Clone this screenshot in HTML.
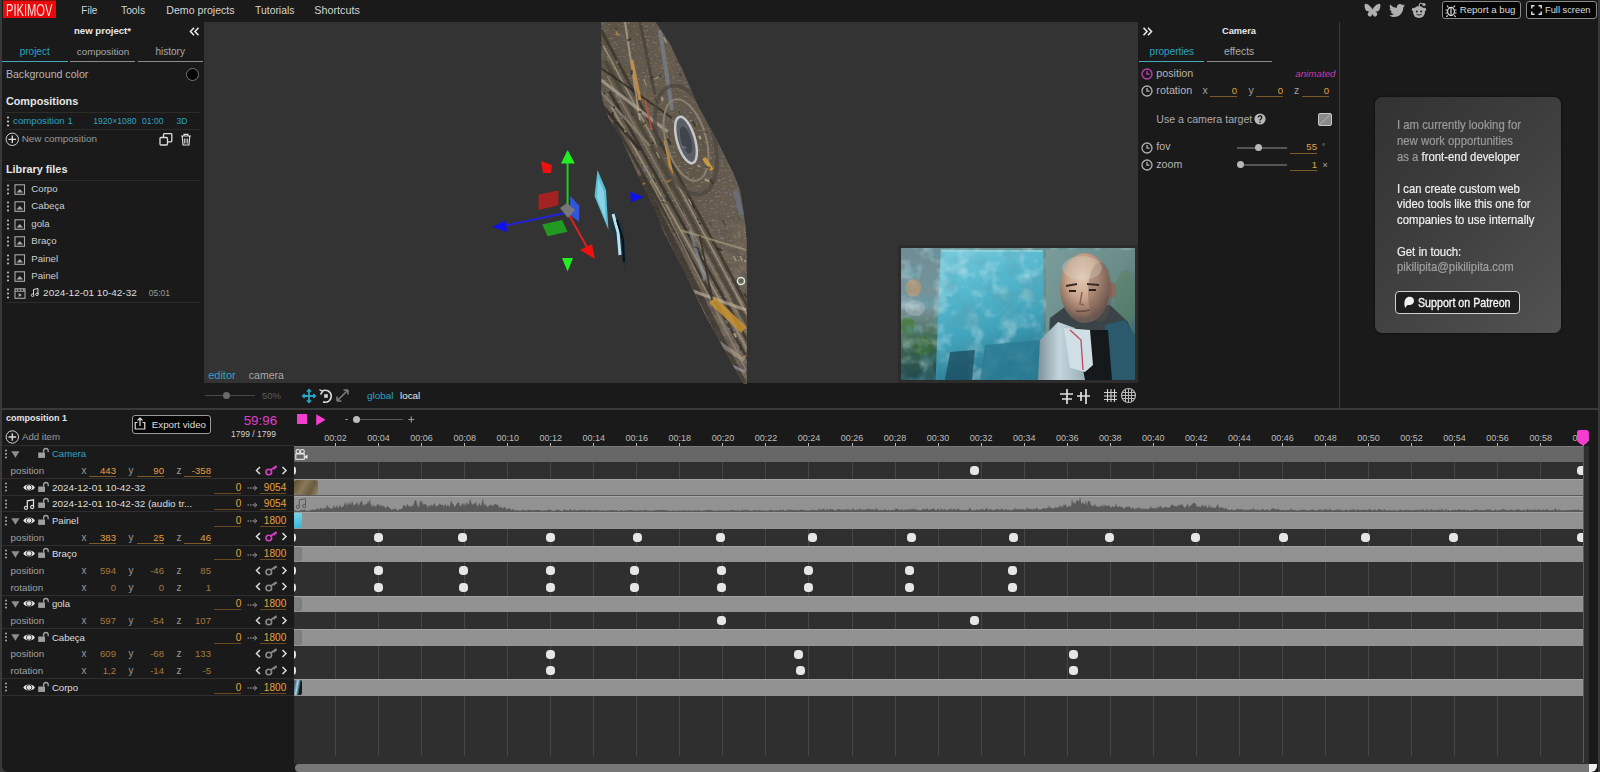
<!DOCTYPE html>
<html><head><meta charset="utf-8"><title>Pikimov</title>
<style>
html,body{margin:0;padding:0;width:1600px;height:772px;overflow:hidden;background:#3a3a3a;}
.t{position:absolute;line-height:1;white-space:pre;font-family:"Liberation Sans", sans-serif;}
.r{position:absolute;}
svg.r{overflow:visible;}
</style></head><body>
<div class="r" style="left:0px;top:0px;width:1600px;height:772px;background:#3a3a3a;"></div>
<div class="r" style="left:2px;top:0px;width:1596px;height:22px;background:#1a1a1a;"></div>
<div class="r" style="left:2px;top:22px;width:202px;height:386px;background:#1a1a1a;"></div>
<div class="r" style="left:204px;top:22px;width:934px;height:362px;background:#333333;"></div>
<div class="r" style="left:204px;top:383px;width:1135px;height:25px;background:#1a1a1a;"></div>
<div class="r" style="left:1138px;top:22px;width:201px;height:386px;background:#1a1a1a;"></div>
<div class="r" style="left:1339px;top:22px;width:1px;height:386px;background:#3a3a3a;"></div>
<div class="r" style="left:1340px;top:22px;width:258px;height:386px;background:#1a1a1a;"></div>
<div class="r" style="left:2px;top:410px;width:1596px;height:362px;background:#1a1a1a;border-bottom-left-radius:6px;"></div>
<div class="r" style="left:3px;top:0px;width:53px;height:18px;background:#e80a0a;"></div>
<div class="r" style="left:3px;top:0px;width:53px;height:1px;background:#8a1010;"></div>
<div class="t" style="left:5.90px;top:2.00px;font-size:17px;color:#ffdede;font-weight:400;transform:scaleX(0.655);transform-origin:0 0;letter-spacing:0px;">PIKIMOV</div>
<div class="t" style="left:81.30px;top:6.00px;font-size:10.0px;color:#d4d4d4;font-weight:400;">File</div>
<div class="t" style="left:121.00px;top:6.00px;font-size:10.3px;color:#d4d4d4;font-weight:400;">Tools</div>
<div class="t" style="left:166.30px;top:5.00px;font-size:10.6px;color:#d4d4d4;font-weight:400;">Demo projects</div>
<div class="t" style="left:255.00px;top:6.00px;font-size:10.4px;color:#d4d4d4;font-weight:400;">Tutorials</div>
<div class="t" style="left:314.30px;top:5.00px;font-size:10.8px;color:#d4d4d4;font-weight:400;">Shortcuts</div>
<svg class="r" style="left:1364px;top:3px;" width="17" height="15" viewBox="0 0 17 15"><path fill="#b0b0b0" d="M8.5 6.5 C7 3.5 3.5 0.5 1.5 0.8 C-0.2 1.2 0.8 6 2 7.5 C3 8.6 5 8.8 6 8.6 C3.8 9.4 3 10.8 4.2 12.6 C5.6 14.6 7.6 13.6 8.5 11 C9.4 13.6 11.4 14.6 12.8 12.6 C14 10.8 13.2 9.4 11 8.6 C12 8.8 14 8.6 15 7.5 C16.2 6 17.2 1.2 15.5 0.8 C13.5 0.5 10 3.5 8.5 6.5Z"/></svg>
<svg class="r" style="left:1389px;top:4px;" width="16" height="13" viewBox="0 0 16 13"><path fill="#b0b0b0" d="M16 1.5c-.6.3-1.2.4-1.9.5.7-.4 1.2-1 1.4-1.8-.6.4-1.3.6-2.1.8C12.8.4 12 0 11 0 9.2 0 7.8 1.5 7.8 3.3c0 .3 0 .5.1.7C5.2 3.9 2.800 2.600 1.100.6.800 1.100.7 1.600.7 2.300c0 1.100.6 2.100 1.500 2.700-.5 0-1-.2-1.500-.4 0 1.600 1.100 2.900 2.600 3.200-.3.1-.6.1-.9.1-.2 0-.4 0-.6-.1.4 1.300 1.600 2.300 3.100 2.300-1.100.9-2.500 1.400-4.100 1.400H0c1.500.9 3.200 1.500 5 1.500 6 0 9.300-5 9.300-9.300v-.4C15 2.800 15.600 2.200 16 1.500z"/></svg>
<svg class="r" style="left:1411px;top:2px;" width="16" height="16" viewBox="0 0 16 16"><circle cx="8" cy="10" r="6" fill="#b0b0b0"/><circle cx="13" cy="2.5" r="1.6" fill="#b0b0b0"/><path d="M8 4.2 L9 1 L13 2.2" stroke="#b0b0b0" stroke-width="1" fill="none"/><circle cx="2.6" cy="7.5" r="1.8" fill="#b0b0b0"/><circle cx="13.4" cy="7.5" r="1.8" fill="#b0b0b0"/><circle cx="5.8" cy="9.6" r="1" fill="#1a1a1a"/><circle cx="10.2" cy="9.6" r="1" fill="#1a1a1a"/><path d="M5.5 12.3 Q8 14 10.5 12.3" stroke="#1a1a1a" stroke-width="0.9" fill="none"/></svg>
<div class="r" style="left:1442px;top:1px;width:77px;height:16px;background:#060606;border:1px solid #8a8a8a;border-radius:3px;"></div>
<svg class="r" style="left:1445px;top:4px;" width="12" height="13" viewBox="0 0 12 13"><g stroke="#dcdcdc" stroke-width="1.2" fill="none"><ellipse cx="6" cy="7.5" rx="3.4" ry="4.2"/><path d="M6 3.5v8M2.6 6H0.5M9.4 6h2.1M2.6 9H0.5M9.4 9h2.1M3.5 3.5 L2 1.5M8.5 3.5 L10 1.5M2.8 11.5 L1.3 12.8M9.2 11.5 L10.7 12.8"/></g></svg>
<div class="t" style="left:1459.70px;top:5.00px;font-size:9.65px;color:#dcdcdc;font-weight:400;">Report a bug</div>
<div class="r" style="left:1526px;top:1px;width:69px;height:16px;background:#060606;border:1px solid #8a8a8a;border-radius:3px;"></div>
<svg class="r" style="left:1531px;top:5px;" width="11" height="10" viewBox="0 0 11 10"><path d="M0.8 3.5V0.8H3.5M7.5 0.8H10.2V3.5M10.2 6.5V9.2H7.5M3.5 9.2H0.8V6.5" stroke="#e0e0e0" stroke-width="1.4" fill="none"/></svg>
<div class="t" style="left:1545.00px;top:6.00px;font-size:9.3px;color:#dcdcdc;font-weight:400;">Full screen</div>
<div class="t" style="left:74.00px;top:26.00px;font-size:9.6px;color:#e8e8e8;font-weight:700;">new project*</div>
<svg class="r" style="left:189px;top:27px;" width="11" height="9" viewBox="0 0 11 9"><path d="M5 0.8 L1.5 4.5 L5 8.2 M9.5 0.8 L6 4.5 L9.5 8.2" stroke="#e6e6e6" stroke-width="1.6" fill="none"/></svg>
<div class="t" style="left:19.70px;top:47.00px;font-size:10.0px;color:#2ba3c4;font-weight:400;">project</div>
<div class="t" style="left:76.80px;top:47.00px;font-size:9.85px;color:#a9a9a9;font-weight:400;">composition</div>
<div class="t" style="left:155.50px;top:47.00px;font-size:10.0px;color:#a9a9a9;font-weight:400;">history</div>
<div class="r" style="left:2px;top:61px;width:66px;height:1px;background:#46aabf;"></div>
<div class="r" style="left:70px;top:61px;width:65px;height:1px;background:#8c8c8c;"></div>
<div class="r" style="left:138px;top:61px;width:65px;height:1px;background:#8c8c8c;"></div>
<div class="t" style="left:5.90px;top:69.00px;font-size:10.6px;color:#b4b4b4;font-weight:400;">Background color</div>
<div class="r" style="left:186px;top:67.5px;width:11px;height:11px;border-radius:50%;background:#050505;border:1px solid #777;"></div>
<div class="t" style="left:5.90px;top:96.00px;font-size:10.86px;color:#e6e6e6;font-weight:700;">Compositions</div>
<div class="r" style="left:6px;top:112px;width:194px;height:1px;background:#2c2c2c;"></div>
<svg class="r" style="left:6px;top:116px;" width="4" height="11" viewBox="0 0 4 11"><circle cx="2" cy="1.5" r="1" fill="#ddd"/><circle cx="2" cy="5.5" r="1" fill="#ddd"/><circle cx="2" cy="9.5" r="1" fill="#ddd"/></svg>
<div class="t" style="left:13.10px;top:116.00px;font-size:9.68px;color:#2ba3c4;font-weight:400;">composition 1</div>
<div class="t" style="left:93.20px;top:117.00px;font-size:8.6px;color:#2ba3c4;font-weight:400;">1920×1080</div>
<div class="t" style="left:142.00px;top:117.00px;font-size:8.6px;color:#2ba3c4;font-weight:400;">01:00</div>
<div class="t" style="left:176.50px;top:117.00px;font-size:8.6px;color:#2ba3c4;font-weight:400;">3D</div>
<div class="r" style="left:6px;top:129px;width:194px;height:1px;background:#2c2c2c;"></div>
<svg class="r" style="left:5px;top:132px;" width="15" height="15" viewBox="0 0 15 15"><circle cx="7.3" cy="7.3" r="6.2" stroke="#d0d0d0" stroke-width="1" fill="none"/><path d="M7.3 3.5v7.6M3.5 7.3h7.6" stroke="#e0e0e0" stroke-width="1.3"/></svg>
<div class="t" style="left:21.70px;top:134.00px;font-size:9.9px;color:#9a9a9a;font-weight:400;">New composition</div>
<svg class="r" style="left:159px;top:133px;" width="14" height="13" viewBox="0 0 14 13"><rect x="1" y="4.5" width="7.5" height="7.5" rx="1" stroke="#ddd" stroke-width="1.3" fill="none"/><path d="M4.5 4.5V1.5a0.8 0.8 0 0 1 .8-.8H12a.8.8 0 0 1 .8.8V8a.8.8 0 0 1-.8.8H8.5" stroke="#ddd" stroke-width="1.3" fill="none"/></svg>
<svg class="r" style="left:180px;top:133px;" width="12" height="13" viewBox="0 0 12 13"><path d="M1 3h10M4 3V1.3h4V3M2.3 3.5l.7 8.5h6l.7-8.5M4.8 5.5v5M7.2 5.5v5" stroke="#ddd" stroke-width="1.2" fill="none"/></svg>
<div class="t" style="left:5.90px;top:164.00px;font-size:10.87px;color:#e6e6e6;font-weight:700;">Library files</div>
<div class="r" style="left:6px;top:180px;width:194px;height:1px;background:#2c2c2c;"></div>
<svg class="r" style="left:6px;top:183.7px;" width="4" height="11" viewBox="0 0 4 11"><circle cx="2" cy="1.5" r="1" fill="#ccc"/><circle cx="2" cy="5.5" r="1" fill="#ccc"/><circle cx="2" cy="9.5" r="1" fill="#ccc"/></svg>
<svg class="r" style="left:14px;top:183.7px;" width="12" height="11" viewBox="0 0 12 11"><rect x="1" y="0.8" width="9.5" height="9.5" stroke="#aaa" stroke-width="1.1" fill="none"/><path d="M2.5 8.5 L5.8 5 L9 8.5Z" fill="#aaa"/></svg>
<div class="t" style="left:31.30px;top:184.00px;font-size:9.66px;color:#cfcfcf;font-weight:400;">Corpo</div>
<svg class="r" style="left:6px;top:201.14999999999998px;" width="4" height="11" viewBox="0 0 4 11"><circle cx="2" cy="1.5" r="1" fill="#ccc"/><circle cx="2" cy="5.5" r="1" fill="#ccc"/><circle cx="2" cy="9.5" r="1" fill="#ccc"/></svg>
<svg class="r" style="left:14px;top:201.14999999999998px;" width="12" height="11" viewBox="0 0 12 11"><rect x="1" y="0.8" width="9.5" height="9.5" stroke="#aaa" stroke-width="1.1" fill="none"/><path d="M2.5 8.5 L5.8 5 L9 8.5Z" fill="#aaa"/></svg>
<div class="t" style="left:31.30px;top:201.00px;font-size:9.66px;color:#cfcfcf;font-weight:400;">Cabeça</div>
<svg class="r" style="left:6px;top:218.6px;" width="4" height="11" viewBox="0 0 4 11"><circle cx="2" cy="1.5" r="1" fill="#ccc"/><circle cx="2" cy="5.5" r="1" fill="#ccc"/><circle cx="2" cy="9.5" r="1" fill="#ccc"/></svg>
<svg class="r" style="left:14px;top:218.6px;" width="12" height="11" viewBox="0 0 12 11"><rect x="1" y="0.8" width="9.5" height="9.5" stroke="#aaa" stroke-width="1.1" fill="none"/><path d="M2.5 8.5 L5.8 5 L9 8.5Z" fill="#aaa"/></svg>
<div class="t" style="left:31.30px;top:219.00px;font-size:9.66px;color:#cfcfcf;font-weight:400;">gola</div>
<svg class="r" style="left:6px;top:236.04999999999998px;" width="4" height="11" viewBox="0 0 4 11"><circle cx="2" cy="1.5" r="1" fill="#ccc"/><circle cx="2" cy="5.5" r="1" fill="#ccc"/><circle cx="2" cy="9.5" r="1" fill="#ccc"/></svg>
<svg class="r" style="left:14px;top:236.04999999999998px;" width="12" height="11" viewBox="0 0 12 11"><rect x="1" y="0.8" width="9.5" height="9.5" stroke="#aaa" stroke-width="1.1" fill="none"/><path d="M2.5 8.5 L5.8 5 L9 8.5Z" fill="#aaa"/></svg>
<div class="t" style="left:31.30px;top:236.00px;font-size:9.66px;color:#cfcfcf;font-weight:400;">Braço</div>
<svg class="r" style="left:6px;top:253.5px;" width="4" height="11" viewBox="0 0 4 11"><circle cx="2" cy="1.5" r="1" fill="#ccc"/><circle cx="2" cy="5.5" r="1" fill="#ccc"/><circle cx="2" cy="9.5" r="1" fill="#ccc"/></svg>
<svg class="r" style="left:14px;top:253.5px;" width="12" height="11" viewBox="0 0 12 11"><rect x="1" y="0.8" width="9.5" height="9.5" stroke="#aaa" stroke-width="1.1" fill="none"/><path d="M2.5 8.5 L5.8 5 L9 8.5Z" fill="#aaa"/></svg>
<div class="t" style="left:31.30px;top:254.00px;font-size:9.66px;color:#cfcfcf;font-weight:400;">Painel</div>
<svg class="r" style="left:6px;top:270.95px;" width="4" height="11" viewBox="0 0 4 11"><circle cx="2" cy="1.5" r="1" fill="#ccc"/><circle cx="2" cy="5.5" r="1" fill="#ccc"/><circle cx="2" cy="9.5" r="1" fill="#ccc"/></svg>
<svg class="r" style="left:14px;top:270.95px;" width="12" height="11" viewBox="0 0 12 11"><rect x="1" y="0.8" width="9.5" height="9.5" stroke="#aaa" stroke-width="1.1" fill="none"/><path d="M2.5 8.5 L5.8 5 L9 8.5Z" fill="#aaa"/></svg>
<div class="t" style="left:31.30px;top:271.00px;font-size:9.66px;color:#cfcfcf;font-weight:400;">Painel</div>
<svg class="r" style="left:6px;top:288.4px;" width="4" height="11" viewBox="0 0 4 11"><circle cx="2" cy="1.5" r="1" fill="#ccc"/><circle cx="2" cy="5.5" r="1" fill="#ccc"/><circle cx="2" cy="9.5" r="1" fill="#ccc"/></svg>
<svg class="r" style="left:14px;top:288.4px;" width="12" height="11" viewBox="0 0 12 11"><rect x="1" y="0.8" width="10" height="9.5" stroke="#aaa" stroke-width="1.1" fill="none"/><path d="M1 3.3h10M3 0.8l1 2.5M6 0.8l1 2.5M9 0.8l1 2.5" stroke="#aaa" stroke-width="0.9"/><path d="M4.6 5 L8 7 L4.6 9Z" fill="#aaa"/></svg>
<svg class="r" style="left:31px;top:288.4px;" width="8" height="9" viewBox="0 0 8 9"><path d="M2.5 7.3V1.5L7 0.5V6.3" stroke="#ddd" stroke-width="1" fill="none"/><circle cx="1.6" cy="7.3" r="1.3" stroke="#ddd" stroke-width="0.9" fill="none"/><circle cx="6" cy="6.3" r="1.3" stroke="#ddd" stroke-width="0.9" fill="none"/></svg>
<div class="t" style="left:43.10px;top:288.00px;font-size:9.97px;color:#dedede;font-weight:400;">2024-12-01 10-42-32</div>
<div class="t" style="left:148.80px;top:289.00px;font-size:8.5px;color:#9a9a9a;font-weight:400;">05:01</div>
<div class="r" style="left:6px;top:302px;width:194px;height:1px;background:#2c2c2c;"></div>
<div class="r" style="left:204px;top:22px;width:934px;height:361.5px;overflow:hidden;">
<svg class="r" style="left:0;top:0" width="934" height="362">
<defs>
<linearGradient id="pg" x1="0" y1="0" x2="0.6" y2="1">
<stop offset="0" stop-color="#5a5042"/><stop offset="0.3" stop-color="#675d4c"/><stop offset="0.55" stop-color="#5e5446"/><stop offset="0.8" stop-color="#6c6052"/><stop offset="1" stop-color="#766a5c"/>
</linearGradient>
<filter id="nzd" x="0" y="0" width="100%" height="100%"><feTurbulence type="fractalNoise" baseFrequency="0.07 0.12" numOctaves="4" seed="7"/><feColorMatrix type="matrix" values="0 0 0 0 0.12  0 0 0 0 0.1  0 0 0 0 0.08  3.5 0 0 0 -1.35"/></filter>
<filter id="nzf" x="0" y="0" width="100%" height="100%"><feTurbulence type="fractalNoise" baseFrequency="0.35 0.5" numOctaves="2" seed="3"/><feColorMatrix type="matrix" values="0 0 0 0 0.85  0 0 0 0 0.78  0 0 0 0 0.66  0 3 0 0 -1.75"/></filter>
<filter id="nzl" x="0" y="0" width="100%" height="100%"><feTurbulence type="fractalNoise" baseFrequency="0.09 0.15" numOctaves="4" seed="21"/><feColorMatrix type="matrix" values="0 0 0 0 0.78  0 0 0 0 0.7  0 0 0 0 0.58  0 2.5 0 0 -1.25"/></filter>
<clipPath id="pc"><polygon points="397.4,0.0 451.6,0.0 465.6,21.3 479.6,50.4 493.6,83.0 510.8,114.3 529.0,150.6 536.2,168.7 541.6,205.0 542.7,218.0 542.7,362.0 539.6,362.0 523.0,332.4 500.2,290.9 480.6,249.5 458.8,208.0 450.9,187.0 432.7,150.6 416.4,114.0 404.6,96.0 398.3,78.0 397.4,70.0"/></clipPath>
</defs>
<polygon points="397.4,0.0 451.6,0.0 465.6,21.3 479.6,50.4 493.6,83.0 510.8,114.3 529.0,150.6 536.2,168.7 541.6,205.0 542.7,218.0 542.7,362.0 539.6,362.0 523.0,332.4 500.2,290.9 480.6,249.5 458.8,208.0 450.9,187.0 432.7,150.6 416.4,114.0 404.6,96.0 398.3,78.0 397.4,70.0" fill="url(#pg)"/>
<g clip-path="url(#pc)">
<rect x="390" y="0" width="160" height="362" filter="url(#nzd)"/>
<rect x="390" y="0" width="160" height="362" filter="url(#nzf)" opacity="0.35"/>
<path d="M397.0,8.0 L556.0,308.0" stroke="#3c372c" stroke-width="3" opacity="0.85" fill="none"/><path d="M399.1,23.4 L556.0,316.4" stroke="#a09580" stroke-width="1.5" opacity="0.85" fill="none"/><path d="M401.2,38.8 L556.0,324.8" stroke="#4a4438" stroke-width="4" opacity="0.85" fill="none"/><path d="M403.3,54.2 L556.0,333.2" stroke="#8a7e68" stroke-width="1.5" opacity="0.85" fill="none"/><path d="M405.4,69.6 L556.0,341.6" stroke="#35322a" stroke-width="3" opacity="0.85" fill="none"/><path d="M407.5,85.0 L556.0,350.0" stroke="#9c907a" stroke-width="2" opacity="0.85" fill="none"/><path d="M409.6,100.4 L556.0,358.4" stroke="#3a362e" stroke-width="3" opacity="0.85" fill="none"/><path d="M397.0,58.0 L464.0,110.0" stroke="#a8a090" stroke-width="3" opacity="0.8" fill="none"/><path d="M397.0,70.0 L446.0,124.0" stroke="#8a8274" stroke-width="2.5" opacity="0.8" fill="none"/><path d="M397.0,46.0 L468.0,96.0" stroke="#2a2822" stroke-width="2" opacity="0.8" fill="none"/><path d="M397.0,82.0 L436.0,128.0" stroke="#2a2620" stroke-width="3" opacity="0.8" fill="none"/><path d="M436.0,154.0 L540.0,362.0" stroke="#2e2a24" stroke-width="6" opacity="0.6" fill="none"/><path d="M446.0,158.0 L542.0,348.0" stroke="#9a8c78" stroke-width="1.5" opacity="0.7" fill="none"/><path d="M421.0,0.0 L436.0,98.0" stroke="#b8a890" stroke-width="2" opacity="0.7" fill="none"/><path d="M436.0,0.0 L451.0,73.0" stroke="#3a3a38" stroke-width="3" opacity="0.6" fill="none"/><path d="M456.0,8.0 L468.0,88.0" stroke="#7a8294" stroke-width="4" opacity="0.7" fill="none"/><path d="M428.0,38.0 L436.0,78.0" stroke="#c89048" stroke-width="3" opacity="0.9" fill="none"/><path d="M441.0,78.0 L448.0,108.0" stroke="#c05040" stroke-width="2" opacity="0.8" fill="none"/><path d="M461.0,118.0 L468.0,153.0" stroke="#d09838" stroke-width="3" opacity="0.8" fill="none"/><g transform="translate(482,118) rotate(-16)"><ellipse rx="28" ry="56" fill="none" stroke="#4a4640" stroke-width="4" opacity="0.7"/><ellipse rx="20" ry="42" fill="none" stroke="#8a8070" stroke-width="2"/><ellipse rx="9" ry="24" fill="#5a5e66" stroke="#c8c8cc" stroke-width="2.5"/><ellipse rx="5" ry="14" fill="#40444c"/></g><path d="M496.0,73.0 L502.0,88.0" stroke="#7a8aa0" stroke-width="5" opacity="0.8" fill="none"/><path d="M531.0,168.0 L538.0,193.0" stroke="#6a7284" stroke-width="5" opacity="0.8" fill="none"/><path d="M500.0,136.0 L508.0,148.0" stroke="#d4a038" stroke-width="4" opacity="0.9" fill="none"/><path d="M476.0,208.0 L542.0,228.0" stroke="#a89878" stroke-width="2" opacity="0.7" fill="none"/><path d="M486.0,268.0 L542.0,288.0" stroke="#c8b8a0" stroke-width="3" opacity="0.6" fill="none"/><path d="M508.0,278.0 L540.0,308.0" stroke="#c89030" stroke-width="8" opacity="0.85" fill="none"/><path d="M496.0,308.0 L540.0,338.0" stroke="#c0b0a0" stroke-width="4" opacity="0.5" fill="none"/><path d="M496.0,214.0 L508.0,278.0" stroke="#383430" stroke-width="2" opacity="0.9" fill="none"/><path d="M486.0,208.0 L501.0,258.0" stroke="#8a96a8" stroke-width="3" opacity="0.6" fill="none"/><path d="M516.0,338.0 L541.0,350.0" stroke="#a0a8b8" stroke-width="3" opacity="0.6" fill="none"/><circle cx="537" cy="259" r="3.5" fill="none" stroke="#d8e8d8" stroke-width="1.5"/>
<path d="M490.6,9.1 l1.4,2.9" stroke="#2e2a24" stroke-width="1" opacity="0.75"/><path d="M496.2,323.0 l2.3,4.4" stroke="#b8a888" stroke-width="1" opacity="0.75"/><path d="M409.9,84.2 l0.0,2.1" stroke="#2a2620" stroke-width="2" opacity="0.75"/><path d="M428.6,213.3 l5.5,-3.2" stroke="#2e2a24" stroke-width="2" opacity="0.75"/><path d="M446.4,56.3 l3.2,-1.8" stroke="#3a342a" stroke-width="2" opacity="0.75"/><path d="M410.3,306.8 l0.0,3.3" stroke="#b8a888" stroke-width="2" opacity="0.75"/><path d="M475.4,352.3 l0.8,2.2" stroke="#c8b898" stroke-width="1.5" opacity="0.75"/><path d="M481.4,255.1 l2.5,4.7" stroke="#c8b898" stroke-width="1" opacity="0.75"/><path d="M522.6,313.7 l1.2,3.2" stroke="#6a7484" stroke-width="1" opacity="0.75"/><path d="M450.8,75.8 l2.3,5.0" stroke="#3a342a" stroke-width="1" opacity="0.75"/><path d="M475.1,88.6 l1.3,3.7" stroke="#3a3028" stroke-width="1" opacity="0.75"/><path d="M497.3,305.1 l2.0,-1.1" stroke="#b8a888" stroke-width="1.5" opacity="0.75"/><path d="M455.4,24.0 l0.0,6.4" stroke="#6a7484" stroke-width="1" opacity="0.75"/><path d="M493.0,143.2 l4.0,1.5" stroke="#c8b898" stroke-width="1" opacity="0.75"/><path d="M432.5,203.2 l2.4,5.2" stroke="#c08a38" stroke-width="2" opacity="0.75"/><path d="M449.6,361.0 l2.1,4.0" stroke="#3a342a" stroke-width="1" opacity="0.75"/><path d="M523.4,55.3 l2.8,5.3" stroke="#c08a38" stroke-width="1" opacity="0.75"/><path d="M452.9,215.7 l1.6,4.4" stroke="#3a3028" stroke-width="1" opacity="0.75"/><path d="M496.7,41.5 l0.0,5.8" stroke="#6a7484" stroke-width="1" opacity="0.75"/><path d="M439.4,57.3 l3.2,6.0" stroke="#c8b898" stroke-width="1" opacity="0.75"/><path d="M471.1,38.5 l3.3,1.2" stroke="#3a3028" stroke-width="1" opacity="0.75"/><path d="M418.6,276.0 l0.0,6.8" stroke="#3a3028" stroke-width="1" opacity="0.75"/><path d="M484.6,176.9 l3.1,5.9" stroke="#c8b898" stroke-width="1" opacity="0.75"/><path d="M404.6,317.8 l1.1,2.1" stroke="#4a4236" stroke-width="1" opacity="0.75"/><path d="M540.7,192.8 l1.2,2.3" stroke="#4a4236" stroke-width="1" opacity="0.75"/><path d="M435.2,315.8 l2.3,6.4" stroke="#3a3028" stroke-width="1" opacity="0.75"/><path d="M501.5,144.4 l4.9,1.8" stroke="#4a4236" stroke-width="2" opacity="0.75"/><path d="M413.9,81.3 l0.9,1.9" stroke="#3a3028" stroke-width="1" opacity="0.75"/><path d="M483.1,2.6 l4.8,1.8" stroke="#2a2620" stroke-width="1" opacity="0.75"/><path d="M530.0,311.2 l2.1,4.0" stroke="#c8b898" stroke-width="2" opacity="0.75"/><path d="M427.7,47.9 l0.0,4.9" stroke="#2a2620" stroke-width="2" opacity="0.75"/><path d="M515.5,68.9 l2.5,4.7" stroke="#6a7484" stroke-width="2" opacity="0.75"/><path d="M456.8,312.7 l2.5,4.7" stroke="#3a342a" stroke-width="1" opacity="0.75"/><path d="M455.6,122.8 l2.2,-1.3" stroke="#2a2620" stroke-width="1" opacity="0.75"/><path d="M475.4,50.7 l1.6,3.0" stroke="#2a2620" stroke-width="1" opacity="0.75"/><path d="M461.6,311.8 l0.0,2.5" stroke="#3a3028" stroke-width="1" opacity="0.75"/><path d="M539.4,335.3 l2.8,-1.6" stroke="#c08a38" stroke-width="2" opacity="0.75"/><path d="M467.2,313.0 l1.3,2.5" stroke="#b8a888" stroke-width="2" opacity="0.75"/><path d="M435.3,283.8 l1.2,3.2" stroke="#3a3028" stroke-width="2" opacity="0.75"/><path d="M418.9,107.4 l2.3,4.3" stroke="#3a3028" stroke-width="1" opacity="0.75"/><path d="M506.7,20.7 l0.0,4.4" stroke="#3a3028" stroke-width="1" opacity="0.75"/><path d="M404.4,183.8 l2.5,-1.5" stroke="#3a342a" stroke-width="1" opacity="0.75"/><path d="M455.8,340.9 l0.0,3.2" stroke="#b8a888" stroke-width="1" opacity="0.75"/><path d="M458.0,211.3 l0.0,3.6" stroke="#c8b898" stroke-width="1" opacity="0.75"/><path d="M495.1,113.7 l1.7,3.6" stroke="#c8b898" stroke-width="2" opacity="0.75"/><path d="M442.8,272.2 l1.0,1.8" stroke="#3a342a" stroke-width="1" opacity="0.75"/><path d="M475.6,183.1 l3.1,5.9" stroke="#3a342a" stroke-width="1" opacity="0.75"/><path d="M450.7,57.1 l4.1,-2.4" stroke="#c8b898" stroke-width="1" opacity="0.75"/><path d="M494.8,200.8 l2.4,0.9" stroke="#2e2a24" stroke-width="1.5" opacity="0.75"/><path d="M413.1,38.7 l0.0,2.8" stroke="#c8b898" stroke-width="1" opacity="0.75"/><path d="M502.2,73.7 l5.9,2.1" stroke="#3a3028" stroke-width="2" opacity="0.75"/><path d="M433.2,328.8 l1.2,2.2" stroke="#c08a38" stroke-width="1.5" opacity="0.75"/><path d="M402.5,120.7 l2.4,4.6" stroke="#c8b898" stroke-width="1" opacity="0.75"/><path d="M505.7,199.7 l1.6,4.5" stroke="#3a342a" stroke-width="1" opacity="0.75"/><path d="M535.9,250.1 l2.2,4.2" stroke="#6a7484" stroke-width="1" opacity="0.75"/><path d="M459.6,15.1 l2.7,5.9" stroke="#b8a888" stroke-width="1.5" opacity="0.75"/><path d="M427.1,90.3 l1.8,3.3" stroke="#3a3028" stroke-width="2" opacity="0.75"/><path d="M540.1,271.3 l3.0,5.6" stroke="#2e2a24" stroke-width="2" opacity="0.75"/><path d="M399.7,266.6 l2.5,5.4" stroke="#c08a38" stroke-width="1" opacity="0.75"/><path d="M435.5,285.0 l1.8,3.5" stroke="#b8a888" stroke-width="2" opacity="0.75"/><path d="M428.9,295.6 l1.3,3.5" stroke="#2a2620" stroke-width="1" opacity="0.75"/><path d="M399.5,69.9 l1.4,3.1" stroke="#3a342a" stroke-width="1.5" opacity="0.75"/><path d="M448.0,184.4 l6.5,2.4" stroke="#3a3028" stroke-width="1.5" opacity="0.75"/><path d="M535.0,41.8 l1.2,2.6" stroke="#c8b898" stroke-width="1" opacity="0.75"/><path d="M412.0,157.3 l5.6,2.0" stroke="#c08a38" stroke-width="1" opacity="0.75"/><path d="M453.0,208.7 l0.9,2.0" stroke="#c08a38" stroke-width="1" opacity="0.75"/><path d="M472.9,292.0 l5.3,1.9" stroke="#2a2620" stroke-width="1.5" opacity="0.75"/><path d="M459.8,343.5 l2.2,4.6" stroke="#3a342a" stroke-width="1.5" opacity="0.75"/><path d="M471.1,241.4 l1.7,3.6" stroke="#c8b898" stroke-width="1" opacity="0.75"/><path d="M424.4,240.7 l1.8,5.1" stroke="#2e2a24" stroke-width="1.5" opacity="0.75"/><path d="M456.1,301.8 l1.5,3.1" stroke="#c08a38" stroke-width="1.5" opacity="0.75"/><path d="M464.8,160.1 l2.1,4.0" stroke="#2e2a24" stroke-width="1" opacity="0.75"/><path d="M438.0,240.3 l0.0,3.7" stroke="#2a2620" stroke-width="1.5" opacity="0.75"/><path d="M429.2,72.1 l1.0,2.0" stroke="#4a4236" stroke-width="1" opacity="0.75"/><path d="M463.4,320.8 l0.0,3.0" stroke="#c08a38" stroke-width="2" opacity="0.75"/><path d="M455.1,53.4 l1.9,0.7" stroke="#3a342a" stroke-width="2" opacity="0.75"/><path d="M428.4,291.1 l4.3,1.6" stroke="#b8a888" stroke-width="1" opacity="0.75"/><path d="M531.8,43.9 l2.8,5.3" stroke="#3a3028" stroke-width="1.5" opacity="0.75"/><path d="M536.6,322.7 l0.0,6.1" stroke="#3a3028" stroke-width="2" opacity="0.75"/><path d="M518.9,198.3 l2.7,5.0" stroke="#4a4236" stroke-width="2" opacity="0.75"/><path d="M434.4,89.5 l3.2,1.2" stroke="#3a3028" stroke-width="2" opacity="0.75"/><path d="M488.8,99.4 l2.6,4.9" stroke="#2a2620" stroke-width="1.5" opacity="0.75"/><path d="M445.7,323.3 l1.3,2.4" stroke="#2a2620" stroke-width="2" opacity="0.75"/><path d="M498.7,255.7 l1.9,3.6" stroke="#6a7484" stroke-width="2" opacity="0.75"/><path d="M457.5,74.9 l1.4,3.7" stroke="#b8a888" stroke-width="2" opacity="0.75"/><path d="M466.6,341.3 l2.4,5.2" stroke="#c08a38" stroke-width="1" opacity="0.75"/><path d="M468.3,98.8 l0.7,2.0" stroke="#6a7484" stroke-width="2" opacity="0.75"/><path d="M503.2,304.3 l3.2,6.1" stroke="#3a3028" stroke-width="1" opacity="0.75"/><path d="M530.2,214.3 l2.0,0.7" stroke="#c08a38" stroke-width="1" opacity="0.75"/><path d="M524.3,65.8 l1.6,3.5" stroke="#2a2620" stroke-width="2" opacity="0.75"/><path d="M444.4,275.6 l1.2,3.2" stroke="#c08a38" stroke-width="1.5" opacity="0.75"/><path d="M519.6,170.3 l4.4,1.6" stroke="#6a7484" stroke-width="1" opacity="0.75"/><path d="M492.2,282.8 l2.1,0.8" stroke="#b8a888" stroke-width="1" opacity="0.75"/><path d="M425.5,7.4 l1.5,2.8" stroke="#4a4236" stroke-width="1" opacity="0.75"/><path d="M479.5,78.9 l3.1,1.1" stroke="#6a7484" stroke-width="1" opacity="0.75"/><path d="M485.7,348.9 l2.4,0.9" stroke="#2e2a24" stroke-width="1.5" opacity="0.75"/><path d="M412.0,9.3 l2.1,4.4" stroke="#c08a38" stroke-width="2" opacity="0.75"/><path d="M535.3,71.8 l0.0,5.5" stroke="#2a2620" stroke-width="1" opacity="0.75"/><path d="M499.2,109.2 l4.7,1.7" stroke="#3a342a" stroke-width="1" opacity="0.75"/><path d="M447.4,155.1 l1.0,2.1" stroke="#6a7484" stroke-width="1" opacity="0.75"/><path d="M521.7,297.7 l2.0,3.7" stroke="#6a7484" stroke-width="2" opacity="0.75"/><path d="M500.7,157.6 l4.3,1.6" stroke="#c8b898" stroke-width="2" opacity="0.75"/><path d="M464.8,298.9 l0.0,3.3" stroke="#2a2620" stroke-width="1" opacity="0.75"/><path d="M437.3,163.2 l3.7,-2.2" stroke="#c08a38" stroke-width="1.5" opacity="0.75"/><path d="M400.2,308.0 l2.1,3.9" stroke="#6a7484" stroke-width="1.5" opacity="0.75"/><path d="M446.4,318.7 l6.0,2.2" stroke="#3a3028" stroke-width="1" opacity="0.75"/><path d="M472.5,69.2 l2.6,4.9" stroke="#4a4236" stroke-width="1" opacity="0.75"/><path d="M498.2,233.8 l1.5,4.0" stroke="#b8a888" stroke-width="1" opacity="0.75"/><path d="M439.5,146.4 l1.7,3.1" stroke="#6a7484" stroke-width="2" opacity="0.75"/><path d="M477.9,124.4 l4.5,1.6" stroke="#6a7484" stroke-width="2" opacity="0.75"/><path d="M436.1,91.0 l2.6,5.0" stroke="#6a7484" stroke-width="1" opacity="0.75"/><path d="M505.9,344.2 l2.7,1.0" stroke="#2a2620" stroke-width="2" opacity="0.75"/><path d="M436.9,213.4 l4.0,-2.3" stroke="#c8b898" stroke-width="1" opacity="0.75"/><path d="M519.2,107.2 l1.2,2.6" stroke="#b8a888" stroke-width="1" opacity="0.75"/><path d="M436.6,352.7 l0.0,3.5" stroke="#2e2a24" stroke-width="2" opacity="0.75"/><path d="M411.2,4.4 l1.8,3.9" stroke="#4a4236" stroke-width="1.5" opacity="0.75"/><path d="M423.3,18.6 l3.8,-2.2" stroke="#3a342a" stroke-width="2" opacity="0.75"/><path d="M468.8,208.9 l2.1,0.8" stroke="#2e2a24" stroke-width="1.5" opacity="0.75"/><path d="M408.6,89.8 l0.0,5.8" stroke="#2a2620" stroke-width="2" opacity="0.75"/><path d="M462.7,160.3 l4.3,-2.5" stroke="#c08a38" stroke-width="1.5" opacity="0.75"/><path d="M480.2,21.8 l2.3,0.9" stroke="#2a2620" stroke-width="1" opacity="0.75"/><path d="M435.2,29.4 l1.3,2.5" stroke="#3a342a" stroke-width="1" opacity="0.75"/><path d="M396.4,163.1 l0.0,4.3" stroke="#b8a888" stroke-width="1" opacity="0.75"/><path d="M438.6,102.3 l3.7,-2.1" stroke="#2a2620" stroke-width="1.5" opacity="0.75"/><path d="M512.6,226.3 l5.7,2.1" stroke="#2a2620" stroke-width="2" opacity="0.75"/><path d="M413.0,81.4 l3.1,5.8" stroke="#2e2a24" stroke-width="1" opacity="0.75"/><path d="M404.8,286.9 l0.0,5.7" stroke="#c8b898" stroke-width="2" opacity="0.75"/><path d="M414.4,249.3 l3.8,1.4" stroke="#c8b898" stroke-width="2" opacity="0.75"/><path d="M460.8,216.5 l1.9,5.3" stroke="#c8b898" stroke-width="1" opacity="0.75"/><path d="M409.5,348.2 l5.5,-3.2" stroke="#b8a888" stroke-width="1.5" opacity="0.75"/><path d="M481.3,276.2 l2.0,3.8" stroke="#4a4236" stroke-width="1.5" opacity="0.75"/><path d="M422.9,211.9 l5.7,2.1" stroke="#3a342a" stroke-width="2" opacity="0.75"/><path d="M447.5,120.7 l2.4,0.9" stroke="#2e2a24" stroke-width="1.5" opacity="0.75"/><path d="M456.9,179.4 l6.3,2.3" stroke="#3a3028" stroke-width="1" opacity="0.75"/><path d="M463.3,113.9 l1.1,2.3" stroke="#c08a38" stroke-width="1" opacity="0.75"/><path d="M493.3,196.4 l0.8,2.1" stroke="#3a3028" stroke-width="1.5" opacity="0.75"/><path d="M488.1,180.5 l2.0,5.5" stroke="#2a2620" stroke-width="1.5" opacity="0.75"/><path d="M477.3,335.8 l2.2,6.0" stroke="#4a4236" stroke-width="1" opacity="0.75"/><path d="M400.3,228.1 l2.8,-1.6" stroke="#2e2a24" stroke-width="1.5" opacity="0.75"/><path d="M477.5,199.9 l1.5,2.8" stroke="#3a342a" stroke-width="2" opacity="0.75"/><path d="M536.2,234.5 l2.1,4.0" stroke="#c8b898" stroke-width="1.5" opacity="0.75"/><path d="M457.5,174.7 l1.1,3.0" stroke="#3a3028" stroke-width="1" opacity="0.75"/><path d="M452.8,333.7 l0.0,5.7" stroke="#2e2a24" stroke-width="1" opacity="0.75"/><path d="M436.9,286.0 l1.3,3.5" stroke="#3a3028" stroke-width="1.5" opacity="0.75"/><path d="M517.4,102.4 l2.6,5.6" stroke="#4a4236" stroke-width="1" opacity="0.75"/><path d="M462.1,175.3 l2.0,4.3" stroke="#3a3028" stroke-width="2" opacity="0.75"/><path d="M463.4,116.5 l3.2,6.1" stroke="#2a2620" stroke-width="2" opacity="0.75"/><path d="M430.6,280.7 l1.7,3.2" stroke="#4a4236" stroke-width="2" opacity="0.75"/><path d="M453.1,240.3 l4.6,-2.6" stroke="#2e2a24" stroke-width="2" opacity="0.75"/><path d="M538.8,45.7 l0.0,3.7" stroke="#3a342a" stroke-width="2" opacity="0.75"/><path d="M410.8,329.6 l2.6,5.0" stroke="#c08a38" stroke-width="1" opacity="0.75"/><path d="M407.1,282.9 l1.6,3.3" stroke="#c08a38" stroke-width="1" opacity="0.75"/><path d="M522.1,308.5 l4.0,-2.3" stroke="#6a7484" stroke-width="2" opacity="0.75"/><path d="M525.1,13.0 l1.5,2.8" stroke="#c8b898" stroke-width="1" opacity="0.75"/><path d="M506.5,157.1 l2.7,5.1" stroke="#3a342a" stroke-width="2" opacity="0.75"/><path d="M420.6,108.4 l1.0,2.0" stroke="#b8a888" stroke-width="1.5" opacity="0.75"/><path d="M449.1,155.9 l2.2,4.1" stroke="#2e2a24" stroke-width="1" opacity="0.75"/><path d="M421.9,220.6 l1.7,4.8" stroke="#2a2620" stroke-width="2" opacity="0.75"/><path d="M531.1,51.8 l1.8,4.9" stroke="#4a4236" stroke-width="1.5" opacity="0.75"/><path d="M494.7,325.4 l2.2,6.1" stroke="#3a3028" stroke-width="1" opacity="0.75"/><path d="M406.9,342.2 l0.0,3.5" stroke="#c08a38" stroke-width="1.5" opacity="0.75"/><path d="M463.6,109.4 l2.1,5.9" stroke="#3a342a" stroke-width="1" opacity="0.75"/><path d="M452.4,129.9 l2.9,6.3" stroke="#c8b898" stroke-width="1" opacity="0.75"/><path d="M540.7,238.3 l0.9,1.8" stroke="#b8a888" stroke-width="2" opacity="0.75"/><path d="M519.3,326.9 l5.2,-3.0" stroke="#6a7484" stroke-width="1" opacity="0.75"/><path d="M490.2,224.8 l5.4,2.0" stroke="#2e2a24" stroke-width="1" opacity="0.75"/><path d="M529.7,234.0 l2.5,5.4" stroke="#b8a888" stroke-width="1.5" opacity="0.75"/><path d="M504.4,32.6 l1.5,3.3" stroke="#c08a38" stroke-width="1" opacity="0.75"/><path d="M425.7,284.7 l2.0,4.2" stroke="#c8b898" stroke-width="1" opacity="0.75"/><path d="M434.0,298.5 l2.3,6.4" stroke="#c8b898" stroke-width="1.5" opacity="0.75"/>
</g>
</svg>
</div>
<svg class="r" style="left:0;top:0" width="1138" height="383">
<polygon points="538.5,194.4 558.5,190.5 558.5,205.3 538.5,209.9" fill="#a32222"/>
<polygon points="542.2,224.4 562.1,219.9 567.6,231.7 547.6,236.2" fill="#229a22"/>
<path d="M567.6 212.6 L567.6 161" stroke="#22cc22" stroke-width="2"/>
<polygon points="561,163.6 567.6,150 574.8,163.6" fill="#22ee22"/>
<polygon points="562,258 573,258 567.6,271.6" fill="#22ee22"/>
<path d="M567.6 212.6 L587 247" stroke="#dd2222" stroke-width="2"/>
<polygon points="580,250 592,244 595,259" fill="#ee1111"/>
<polygon points="541,161 552,165 551,173 543,173" fill="#ee1111"/>
<path d="M567.6 212.6 L503 226" stroke="#2222dd" stroke-width="2"/>
<polygon points="492.3,227.1 506,220 507,232" fill="#1111ee"/>
<polygon points="630.2,191.7 643.8,197 631,202.6" fill="#1111ee"/>
<polygon points="570.3,196 579.4,206 579,221.7 570,215" fill="#3355dd"/>
<polygon points="560,208 567,203 575,210 568,218" fill="#777"/>
<polygon points="597.5,170 606,190 608.4,229.8 594.5,196" fill="#58bcd4"/>
<polygon points="598,178 604,192 606,222 597,198" fill="#86d2e6"/>
<polygon points="612,209 624,228 625.7,269.8 610.2,225.3" fill="#1e3440"/>
<path d="M613 214 L618 232 L620 255" stroke="#b8e4f0" stroke-width="3" fill="none"/>
<path d="M617 220 L623 240 L624 262" stroke="#0a1014" stroke-width="2" fill="none"/>
</svg>
<div class="r" style="left:898px;top:245px;width:240px;height:138px;background:#2c2c2c;"></div>
<svg class="r" style="left:901px;top:248px;overflow:hidden" width="234" height="132"><defs>
<linearGradient id="ice" x1="0" y1="0" x2="0.3" y2="1"><stop offset="0" stop-color="#7cccdc"/><stop offset="0.35" stop-color="#56b8ce"/><stop offset="0.7" stop-color="#40a2ba"/><stop offset="1" stop-color="#287890"/></linearGradient>
<linearGradient id="lft" x1="0" y1="0" x2="0" y2="1"><stop offset="0" stop-color="#6e8c94"/><stop offset="0.45" stop-color="#7a949a"/><stop offset="0.7" stop-color="#3e6850"/><stop offset="1" stop-color="#22484c"/></linearGradient>
<linearGradient id="bgm" x1="0" y1="0" x2="1" y2="1"><stop offset="0" stop-color="#7a9c9c"/><stop offset="0.5" stop-color="#6a8c88"/><stop offset="1" stop-color="#2a5a66"/></linearGradient>
<radialGradient id="head" cx="0.45" cy="0.35" r="0.6"><stop offset="0" stop-color="#e4cab4"/><stop offset="0.5" stop-color="#c8a48c"/><stop offset="0.85" stop-color="#8e7060"/><stop offset="1" stop-color="#6a5a54"/></radialGradient>
<linearGradient id="jk" x1="0" y1="0" x2="1" y2="0"><stop offset="0" stop-color="#7e929c"/><stop offset="0.45" stop-color="#c4d4dc"/><stop offset="1" stop-color="#9aaeb8"/></linearGradient>
<filter id="vnz" x="0" y="0" width="100%" height="100%"><feTurbulence type="fractalNoise" baseFrequency="0.06" numOctaves="3" seed="5"/><feColorMatrix type="matrix" values="0 0 0 0 0.75  0 0 0 0 0.9  0 0 0 0 0.95  0 2.5 0 0 -1.2"/></filter>
<filter id="vnd" x="0" y="0" width="100%" height="100%"><feTurbulence type="fractalNoise" baseFrequency="0.05" numOctaves="3" seed="9"/><feColorMatrix type="matrix" values="0 0 0 0 0.1  0 0 0 0 0.35  0 0 0 0 0.42  2.5 0 0 0 -1.2"/></filter>
</defs><rect x="0" y="0" width="234" height="132" fill="url(#bgm)"/><rect x="0" y="0" width="40" height="132" fill="url(#lft)"/><ellipse cx="12" cy="40" rx="8" ry="9" fill="#c09a70" opacity="0.7"/><ellipse cx="7" cy="78" rx="7" ry="9" fill="#4a7a40" opacity="0.8"/><ellipse cx="22" cy="98" rx="9" ry="10" fill="#3a6a38" opacity="0.8"/><ellipse cx="14" cy="60" rx="10" ry="8" fill="#a8b8c0" opacity="0.5"/><polygon points="39.8,1.6 142.0,2.0 144.0,132.0 34.6,132.0" fill="url(#ice)" /><polygon points="40.0,2.0 142.0,2.0 142.0,4.0 40.0,4.0" fill="#a8dce8" opacity="0.5"/><rect x="0" y="0" width="234" height="132" filter="url(#vnz)" opacity="0.5"/><rect x="0" y="0" width="234" height="132" filter="url(#vnd)" opacity="0.6"/><polygon points="84.0,97.0 139.0,92.0 141.0,132.0 79.0,132.0" fill="#2a7a92" opacity="0.8"/><polygon points="49.0,104.0 74.0,102.0 71.0,132.0 44.0,132.0" fill="#1c4e60" opacity="0.8"/><polygon points="145.0,2.0 234.0,2.0 234.0,132.0 145.0,132.0" fill="url(#bgm)" /><ellipse cx="225" cy="50" rx="12" ry="28" fill="#5a8060" opacity="0.5"/><polygon points="149.0,70.0 169.0,55.0 209.0,57.0 227.0,74.0 234.0,92.0 234.0,132.0 145.0,132.0" fill="#3a4448" /><polygon points="204.0,77.0 224.0,72.0 234.0,87.0 234.0,132.0 199.0,132.0" fill="#2a5a6c" /><polygon points="174.0,82.0 207.0,82.0 211.0,132.0 177.0,132.0" fill="#15191c" /><polygon points="139.0,92.0 157.0,74.0 174.0,80.0 184.0,132.0 137.0,132.0" fill="url(#jk)" /><polygon points="163.0,80.0 189.0,82.0 192.0,117.0 184.0,124.0 169.0,120.0" fill="#d0dee6" /><path d="M169.0,82.0 L180.0,92.0 L182.0,122.0" stroke="#c04858" stroke-width="1.3" fill="none"/><ellipse cx="184" cy="40" rx="25" ry="35" fill="url(#head)"/><ellipse cx="211" cy="42" rx="4" ry="8" fill="#8a6a5a"/><ellipse cx="199" cy="44" rx="12" ry="30" fill="#6a5048" opacity="0.35"/><ellipse cx="181" cy="20" rx="20" ry="12" fill="#d8d0c0" opacity="0.35"/><path d="M165.0,38.0 l11 -2 M186.0,36.0 l12 1" stroke="#3a2a24" stroke-width="2.2" fill="none"/><path d="M168.0,43.0 l7 0 M188.0,42.0 l7 0" stroke="#2a2020" stroke-width="2" fill="none"/><path d="M181.0,44.0 l-2 12 l4 1" stroke="#8a6050" stroke-width="1.5" fill="none"/><path d="M175.0,63.0 q7 1 14 -1" stroke="#6a4a40" stroke-width="1.6" fill="none"/></svg>
<div class="t" style="left:208.20px;top:370.00px;font-size:11.0px;color:#2ba3c4;font-weight:400;">editor</div>
<div class="t" style="left:248.70px;top:370.00px;font-size:10.6px;color:#a8a8a8;font-weight:400;">camera</div>
<div class="r" style="left:205px;top:394.5px;width:50px;height:1.5px;background:#4a4a4a;"></div>
<div class="r" style="left:222.5px;top:391.5px;width:7px;height:7px;border-radius:50%;background:#6a6a6a;"></div>
<div class="t" style="left:262.00px;top:391.00px;font-size:9.5px;color:#5a5a5a;font-weight:400;">50%</div>
<svg class="r" style="left:302px;top:389px;" width="14" height="14" viewBox="0 0 14 14"><path d="M7 1.5v11M1.5 7h11" stroke="#2ba3c4" stroke-width="1.8"/><path d="M5 2.6L7 0.6L9 2.6M5 11.4L7 13.4L9 11.4M2.6 5L0.6 7L2.6 9M11.4 5L13.4 7L11.4 9" stroke="#2ba3c4" stroke-width="1.5" fill="none"/></svg>
<svg class="r" style="left:318px;top:388px;" width="16" height="16" viewBox="0 0 16 16"><path d="M4 3.2 A6 6 0 1 1 5 13.8" stroke="#d8d8d8" stroke-width="1.6" fill="none"/><path d="M1.5 1.5 L4.5 3.5 L2.5 6.5" stroke="#d8d8d8" stroke-width="1.5" fill="none"/><rect x="6.2" y="6.2" width="3.6" height="3.6" fill="#d8d8d8"/></svg>
<svg class="r" style="left:335px;top:388px;" width="15" height="15" viewBox="0 0 15 15"><path d="M2 13L13 2M2 13h4.5M2 13V8.5M13 2H8.5M13 2v4.5" stroke="#7a7a7a" stroke-width="1.6" fill="none"/></svg>
<div class="t" style="left:367.00px;top:391.00px;font-size:9.9px;color:#2ba3c4;font-weight:400;">global</div>
<div class="t" style="left:400.00px;top:391.00px;font-size:9.9px;color:#e8e8e8;font-weight:400;">local</div>
<svg class="r" style="left:1059px;top:388px;" width="16" height="16" viewBox="0 0 16 16"><path d="M1 6h13M3 11h10M8 1v15" stroke="#dedede" stroke-width="1.7"/></svg>
<svg class="r" style="left:1076px;top:388px;" width="15" height="16" viewBox="0 0 15 16"><path d="M1 8h13M5 4v9M10 1v15" stroke="#dedede" stroke-width="1.7"/></svg>
<svg class="r" style="left:1103px;top:388px;" width="15" height="15" viewBox="0 0 15 15"><path d="M1 4.5h13M1 8h13M1 11.5h13M4.5 1v13M8 1v13M11.5 1v13" stroke="#d0d0d0" stroke-width="1.1"/></svg>
<svg class="r" style="left:1120px;top:387px;" width="17" height="17" viewBox="0 0 17 17"><circle cx="8.5" cy="8.5" r="7" stroke="#b8b8b8" stroke-width="1.2" fill="none"/><path d="M2 5.5h13M1.5 8.5h14M2 11.5h13M5.5 2v13M8.5 1.5v14M11.5 2v13" stroke="#b8b8b8" stroke-width="1"/></svg>
<svg class="r" style="left:1142px;top:27px;" width="11" height="9" viewBox="0 0 11 9"><path d="M1.5 0.8 L5 4.5 L1.5 8.2 M6 0.8 L9.5 4.5 L6 8.2" stroke="#e6e6e6" stroke-width="1.6" fill="none"/></svg>
<div class="t" style="left:1222.00px;top:27.00px;font-size:9.27px;color:#e8e8e8;font-weight:700;">Camera</div>
<div class="t" style="left:1149.60px;top:47.00px;font-size:10.03px;color:#2ba3c4;font-weight:400;">properties</div>
<div class="t" style="left:1223.90px;top:47.00px;font-size:10.35px;color:#a9a9a9;font-weight:400;">effects</div>
<div class="r" style="left:1139px;top:61px;width:65px;height:1px;background:#46aabf;"></div>
<div class="r" style="left:1207px;top:61px;width:65px;height:1px;background:#8c8c8c;"></div>
<svg class="r" style="left:1141px;top:68px;" width="12" height="12" viewBox="0 0 12 12"><circle cx="6" cy="6" r="5" stroke="#c040b0" stroke-width="1.3" fill="none"/><path d="M6 3v3.2h2.6" stroke="#c040b0" stroke-width="1.3" fill="none"/></svg>
<div class="t" style="left:1156.30px;top:68.00px;font-size:10.71px;color:#b4b4b4;font-weight:400;">position</div>
<div class="t" style="left:1295.20px;top:69.00px;font-size:9.82px;color:#c43ab4;font-weight:400;font-style:italic;">animated</div>
<svg class="r" style="left:1141px;top:85px;" width="12" height="12" viewBox="0 0 12 12"><circle cx="6" cy="6" r="5" stroke="#b0b0b0" stroke-width="1.3" fill="none"/><path d="M6 3v3.2h2.6" stroke="#b0b0b0" stroke-width="1.3" fill="none"/></svg>
<div class="t" style="left:1156.30px;top:85.00px;font-size:10.79px;color:#b4b4b4;font-weight:400;">rotation</div>
<div class="t" style="left:1202.40px;top:85.00px;font-size:10.5px;color:#a0a0a0;font-weight:400;">x</div>
<div class="t" style="left:1177.00px;width:60px;text-align:right;top:86.00px;font-size:9.6px;color:#e3a142;font-weight:400;">0</div>
<div class="r" style="left:1210px;top:96px;width:27px;height:1px;background:#7a5a28;"></div>
<div class="t" style="left:1248.50px;top:85.00px;font-size:10.5px;color:#a0a0a0;font-weight:400;">y</div>
<div class="t" style="left:1223.00px;width:60px;text-align:right;top:86.00px;font-size:9.6px;color:#e3a142;font-weight:400;">0</div>
<div class="r" style="left:1256px;top:96px;width:27px;height:1px;background:#7a5a28;"></div>
<div class="t" style="left:1294.00px;top:85.00px;font-size:10.5px;color:#a0a0a0;font-weight:400;">z</div>
<div class="t" style="left:1269.00px;width:60px;text-align:right;top:86.00px;font-size:9.6px;color:#e3a142;font-weight:400;">0</div>
<div class="r" style="left:1302px;top:96px;width:27px;height:1px;background:#7a5a28;"></div>
<div class="t" style="left:1156.30px;top:114.00px;font-size:10.6px;color:#aaaaaa;font-weight:400;">Use a camera target</div>
<svg class="r" style="left:1253.5px;top:113px;" width="12" height="12" viewBox="0 0 12 12"><circle cx="6" cy="6" r="5.6" fill="#b8b8b8"/><path d="M4.2 4.6a1.8 1.8 0 1 1 2.6 1.6c-.6.3-.8.6-.8 1.2" stroke="#1a1a1a" stroke-width="1.3" fill="none"/><circle cx="6" cy="9.2" r=".8" fill="#1a1a1a"/></svg>
<div class="r" style="left:1318px;top:112.5px;width:11.5px;height:11.5px;border-radius:2px;background:linear-gradient(135deg,#8a8a8a 45%,#b0b0b0 50%,#8a8a8a 55%);border:1px solid #c8c8c8;"></div>
<svg class="r" style="left:1141px;top:142px;" width="12" height="12" viewBox="0 0 12 12"><circle cx="6" cy="6" r="5" stroke="#b0b0b0" stroke-width="1.3" fill="none"/><path d="M6 3v3.2h2.6" stroke="#b0b0b0" stroke-width="1.3" fill="none"/></svg>
<div class="t" style="left:1156.30px;top:141.00px;font-size:10.6px;color:#b4b4b4;font-weight:400;">fov</div>
<div class="r" style="left:1237px;top:147px;width:50px;height:1.5px;background:#555;"></div>
<div class="r" style="left:1255px;top:144px;width:7px;height:7px;border-radius:50%;background:#b8b8b8;"></div>
<div class="t" style="left:1257.00px;width:60px;text-align:right;top:142.00px;font-size:9.6px;color:#e3a142;font-weight:400;">55</div>
<div class="r" style="left:1290px;top:153px;width:27px;height:1px;background:#7a5a28;"></div>
<div class="t" style="left:1322.00px;top:143.00px;font-size:8px;color:#aaa;font-weight:400;">°</div>
<svg class="r" style="left:1141px;top:159px;" width="12" height="12" viewBox="0 0 12 12"><circle cx="6" cy="6" r="5" stroke="#b0b0b0" stroke-width="1.3" fill="none"/><path d="M6 3v3.2h2.6" stroke="#b0b0b0" stroke-width="1.3" fill="none"/></svg>
<div class="t" style="left:1156.30px;top:159.00px;font-size:10.6px;color:#b4b4b4;font-weight:400;">zoom</div>
<div class="r" style="left:1237px;top:164px;width:50px;height:1.5px;background:#555;"></div>
<div class="r" style="left:1236.8px;top:161px;width:7px;height:7px;border-radius:50%;background:#b8b8b8;"></div>
<div class="t" style="left:1257.00px;width:60px;text-align:right;top:160.00px;font-size:9.6px;color:#e3a142;font-weight:400;">1</div>
<div class="r" style="left:1290px;top:170px;width:27px;height:1px;background:#7a5a28;"></div>
<div class="t" style="left:1322.50px;top:161.00px;font-size:9px;color:#aaa;font-weight:400;">×</div>
<div class="r" style="left:1375px;top:97px;width:186px;height:236px;border-radius:7px;background:linear-gradient(135deg,#323232 0%,#3e3e3e 45%,#525252 100%);box-shadow:0 0 3px rgba(0,0,0,0.6);"></div>
<div class="t" style="left:1396.50px;top:119.00px;font-size:12.6px;color:#9a9a9a;font-weight:400;transform:scaleX(0.9);transform-origin:0 0;white-space:nowrap;-webkit-text-stroke:0.2px currentColor;">I am currently looking for</div>
<div class="t" style="left:1396.50px;top:135.00px;font-size:12.6px;color:#9a9a9a;font-weight:400;transform:scaleX(0.9);transform-origin:0 0;white-space:nowrap;-webkit-text-stroke:0.2px currentColor;">new work opportunities</div>
<div class="t" style="left:1396.50px;top:151.00px;font-size:12.6px;color:#9a9a9a;font-weight:400;transform:scaleX(0.9);transform-origin:0 0;white-space:nowrap;-webkit-text-stroke:0.2px currentColor;">as a <span style="color:#f0f0f0">front-end developer</span></div>
<div class="t" style="left:1396.50px;top:183.00px;font-size:12.6px;color:#f0f0f0;font-weight:400;transform:scaleX(0.9);transform-origin:0 0;white-space:nowrap;-webkit-text-stroke:0.2px currentColor;">I can create custom web</div>
<div class="t" style="left:1396.50px;top:198.00px;font-size:12.6px;color:#f0f0f0;font-weight:400;transform:scaleX(0.9);transform-origin:0 0;white-space:nowrap;-webkit-text-stroke:0.2px currentColor;">video tools like this one for</div>
<div class="t" style="left:1396.50px;top:214.00px;font-size:12.6px;color:#f0f0f0;font-weight:400;transform:scaleX(0.9);transform-origin:0 0;white-space:nowrap;-webkit-text-stroke:0.2px currentColor;">companies to use internally</div>
<div class="t" style="left:1396.50px;top:246.00px;font-size:12.6px;color:#f0f0f0;font-weight:400;transform:scaleX(0.9);transform-origin:0 0;white-space:nowrap;-webkit-text-stroke:0.2px currentColor;">Get in touch:</div>
<div class="t" style="left:1396.50px;top:261.00px;font-size:12.6px;color:#a0a0a0;font-weight:400;transform:scaleX(0.9);transform-origin:0 0;white-space:nowrap;-webkit-text-stroke:0.2px currentColor;">pikilipita@pikilipita.com</div>
<div class="r" style="left:1395px;top:291px;width:123px;height:20.5px;border-radius:4px;background:#1e1e1e;border:1px solid #d0d0d0;"></div>
<svg class="r" style="left:1403px;top:296px;" width="12" height="12" viewBox="0 0 12 12"><path d="M2 11.5 C1 8 1 3 4.5 1.3 C7.5 0 11 1.5 11 4.8 C11 8 8 9.3 5.5 9 C4.5 8.9 3.6 9.5 3.2 10.6 C2.9 11.5 2.4 11.8 2 11.5Z" fill="#f0f0f0"/></svg>
<div class="t" style="left:1418.00px;top:297.00px;font-size:12.2px;color:#f4f4f4;font-weight:400;transform:scaleX(0.875);transform-origin:0 0;white-space:nowrap;-webkit-text-stroke:0.35px #f4f4f4;">Support on Patreon</div>
<div class="t" style="left:6.10px;top:414.00px;font-size:8.98px;color:#e6e6e6;font-weight:700;">composition 1</div>
<svg class="r" style="left:5px;top:430px;" width="15" height="15" viewBox="0 0 15 15"><circle cx="7.3" cy="7" r="6.2" stroke="#d0d0d0" stroke-width="1" fill="none"/><path d="M7.3 3.2v7.6M3.5 7h7.6" stroke="#e0e0e0" stroke-width="1.3"/></svg>
<div class="t" style="left:22.00px;top:432.00px;font-size:9.63px;color:#999999;font-weight:400;">Add item</div>
<div class="r" style="left:131.5px;top:415.3px;width:77.5px;height:16.5px;background:#060606;border:1px solid #9a9a9a;border-radius:3px;"></div>
<svg class="r" style="left:134px;top:417px;" width="12" height="13" viewBox="0 0 12 13"><path d="M3.5 5.5H1.2V12h9.6V5.5H8.5" stroke="#dcdcdc" stroke-width="1.2" fill="none"/><path d="M6 9V1.2M3.5 3.5L6 1L8.5 3.5" stroke="#dcdcdc" stroke-width="1.2" fill="none"/></svg>
<div class="t" style="left:151.80px;top:420.00px;font-size:9.75px;color:#dcdcdc;font-weight:400;">Export video</div>
<div class="t" style="left:243.70px;top:414.00px;font-size:13.35px;color:#e03ec8;font-weight:400;">59:96</div>
<div class="t" style="left:231.10px;top:430.00px;font-size:8.5px;color:#cfcfcf;font-weight:400;">1799 / 1799</div>
<div class="r" style="left:297px;top:414.3px;width:10.4px;height:9.8px;background:#f53dd0;"></div>
<svg class="r" style="left:316px;top:413.5px;" width="10" height="12" viewBox="0 0 10 12"><path d="M0.2 0.3 L9.6 5.8 L0.2 11.4Z" fill="#f53dd0"/></svg>
<div class="r" style="left:344.6px;top:418.8px;width:3.3px;height:1.2px;background:#888;"></div>
<div class="r" style="left:356px;top:418.8px;width:47px;height:1.5px;background:#555;"></div>
<div class="r" style="left:352.5px;top:415.9px;width:7px;height:7px;border-radius:50%;background:#bdbdbd;"></div>
<svg class="r" style="left:408px;top:416px;" width="7" height="7" viewBox="0 0 7 7"><path d="M3.3 0.5v6M0.3 3.5h6" stroke="#999" stroke-width="1.1"/></svg>
<div class="r" style="left:0;top:0;width:1600px;height:772px;clip-path:inset(425px 11px 320px 294px);">
<div class="t" style="left:315.54px;width:40px;text-align:center;top:434.00px;font-size:9.0px;color:#bdbdbd;font-weight:400;white-space:nowrap;">00:02</div>
<div class="r" style="left:335px;top:443px;width:1px;height:3px;background:#bdbdbd;"></div>
<div class="t" style="left:358.58px;width:40px;text-align:center;top:434.00px;font-size:9.0px;color:#bdbdbd;font-weight:400;white-space:nowrap;">00:04</div>
<div class="r" style="left:378px;top:443px;width:1px;height:3px;background:#bdbdbd;"></div>
<div class="t" style="left:401.62px;width:40px;text-align:center;top:434.00px;font-size:9.0px;color:#bdbdbd;font-weight:400;white-space:nowrap;">00:06</div>
<div class="r" style="left:421px;top:443px;width:1px;height:3px;background:#bdbdbd;"></div>
<div class="t" style="left:444.66px;width:40px;text-align:center;top:434.00px;font-size:9.0px;color:#bdbdbd;font-weight:400;white-space:nowrap;">00:08</div>
<div class="r" style="left:464px;top:443px;width:1px;height:3px;background:#bdbdbd;"></div>
<div class="t" style="left:487.70px;width:40px;text-align:center;top:434.00px;font-size:9.0px;color:#bdbdbd;font-weight:400;white-space:nowrap;">00:10</div>
<div class="r" style="left:507px;top:443px;width:1px;height:3px;background:#bdbdbd;"></div>
<div class="t" style="left:530.74px;width:40px;text-align:center;top:434.00px;font-size:9.0px;color:#bdbdbd;font-weight:400;white-space:nowrap;">00:12</div>
<div class="r" style="left:550px;top:443px;width:1px;height:3px;background:#bdbdbd;"></div>
<div class="t" style="left:573.78px;width:40px;text-align:center;top:434.00px;font-size:9.0px;color:#bdbdbd;font-weight:400;white-space:nowrap;">00:14</div>
<div class="r" style="left:593px;top:443px;width:1px;height:3px;background:#bdbdbd;"></div>
<div class="t" style="left:616.82px;width:40px;text-align:center;top:434.00px;font-size:9.0px;color:#bdbdbd;font-weight:400;white-space:nowrap;">00:16</div>
<div class="r" style="left:636px;top:443px;width:1px;height:3px;background:#bdbdbd;"></div>
<div class="t" style="left:659.86px;width:40px;text-align:center;top:434.00px;font-size:9.0px;color:#bdbdbd;font-weight:400;white-space:nowrap;">00:18</div>
<div class="r" style="left:679px;top:443px;width:1px;height:3px;background:#bdbdbd;"></div>
<div class="t" style="left:702.90px;width:40px;text-align:center;top:434.00px;font-size:9.0px;color:#bdbdbd;font-weight:400;white-space:nowrap;">00:20</div>
<div class="r" style="left:722px;top:443px;width:1px;height:3px;background:#bdbdbd;"></div>
<div class="t" style="left:745.94px;width:40px;text-align:center;top:434.00px;font-size:9.0px;color:#bdbdbd;font-weight:400;white-space:nowrap;">00:22</div>
<div class="r" style="left:765px;top:443px;width:1px;height:3px;background:#bdbdbd;"></div>
<div class="t" style="left:788.98px;width:40px;text-align:center;top:434.00px;font-size:9.0px;color:#bdbdbd;font-weight:400;white-space:nowrap;">00:24</div>
<div class="r" style="left:808px;top:443px;width:1px;height:3px;background:#bdbdbd;"></div>
<div class="t" style="left:832.02px;width:40px;text-align:center;top:434.00px;font-size:9.0px;color:#bdbdbd;font-weight:400;white-space:nowrap;">00:26</div>
<div class="r" style="left:852px;top:443px;width:1px;height:3px;background:#bdbdbd;"></div>
<div class="t" style="left:875.06px;width:40px;text-align:center;top:434.00px;font-size:9.0px;color:#bdbdbd;font-weight:400;white-space:nowrap;">00:28</div>
<div class="r" style="left:895px;top:443px;width:1px;height:3px;background:#bdbdbd;"></div>
<div class="t" style="left:918.10px;width:40px;text-align:center;top:434.00px;font-size:9.0px;color:#bdbdbd;font-weight:400;white-space:nowrap;">00:30</div>
<div class="r" style="left:938px;top:443px;width:1px;height:3px;background:#bdbdbd;"></div>
<div class="t" style="left:961.14px;width:40px;text-align:center;top:434.00px;font-size:9.0px;color:#bdbdbd;font-weight:400;white-space:nowrap;">00:32</div>
<div class="r" style="left:981px;top:443px;width:1px;height:3px;background:#bdbdbd;"></div>
<div class="t" style="left:1004.18px;width:40px;text-align:center;top:434.00px;font-size:9.0px;color:#bdbdbd;font-weight:400;white-space:nowrap;">00:34</div>
<div class="r" style="left:1024px;top:443px;width:1px;height:3px;background:#bdbdbd;"></div>
<div class="t" style="left:1047.22px;width:40px;text-align:center;top:434.00px;font-size:9.0px;color:#bdbdbd;font-weight:400;white-space:nowrap;">00:36</div>
<div class="r" style="left:1067px;top:443px;width:1px;height:3px;background:#bdbdbd;"></div>
<div class="t" style="left:1090.26px;width:40px;text-align:center;top:434.00px;font-size:9.0px;color:#bdbdbd;font-weight:400;white-space:nowrap;">00:38</div>
<div class="r" style="left:1110px;top:443px;width:1px;height:3px;background:#bdbdbd;"></div>
<div class="t" style="left:1133.30px;width:40px;text-align:center;top:434.00px;font-size:9.0px;color:#bdbdbd;font-weight:400;white-space:nowrap;">00:40</div>
<div class="r" style="left:1153px;top:443px;width:1px;height:3px;background:#bdbdbd;"></div>
<div class="t" style="left:1176.34px;width:40px;text-align:center;top:434.00px;font-size:9.0px;color:#bdbdbd;font-weight:400;white-space:nowrap;">00:42</div>
<div class="r" style="left:1196px;top:443px;width:1px;height:3px;background:#bdbdbd;"></div>
<div class="t" style="left:1219.38px;width:40px;text-align:center;top:434.00px;font-size:9.0px;color:#bdbdbd;font-weight:400;white-space:nowrap;">00:44</div>
<div class="r" style="left:1239px;top:443px;width:1px;height:3px;background:#bdbdbd;"></div>
<div class="t" style="left:1262.42px;width:40px;text-align:center;top:434.00px;font-size:9.0px;color:#bdbdbd;font-weight:400;white-space:nowrap;">00:46</div>
<div class="r" style="left:1282px;top:443px;width:1px;height:3px;background:#bdbdbd;"></div>
<div class="t" style="left:1305.46px;width:40px;text-align:center;top:434.00px;font-size:9.0px;color:#bdbdbd;font-weight:400;white-space:nowrap;">00:48</div>
<div class="r" style="left:1325px;top:443px;width:1px;height:3px;background:#bdbdbd;"></div>
<div class="t" style="left:1348.50px;width:40px;text-align:center;top:434.00px;font-size:9.0px;color:#bdbdbd;font-weight:400;white-space:nowrap;">00:50</div>
<div class="r" style="left:1368px;top:443px;width:1px;height:3px;background:#bdbdbd;"></div>
<div class="t" style="left:1391.54px;width:40px;text-align:center;top:434.00px;font-size:9.0px;color:#bdbdbd;font-weight:400;white-space:nowrap;">00:52</div>
<div class="r" style="left:1411px;top:443px;width:1px;height:3px;background:#bdbdbd;"></div>
<div class="t" style="left:1434.58px;width:40px;text-align:center;top:434.00px;font-size:9.0px;color:#bdbdbd;font-weight:400;white-space:nowrap;">00:54</div>
<div class="r" style="left:1454px;top:443px;width:1px;height:3px;background:#bdbdbd;"></div>
<div class="t" style="left:1477.62px;width:40px;text-align:center;top:434.00px;font-size:9.0px;color:#bdbdbd;font-weight:400;white-space:nowrap;">00:56</div>
<div class="r" style="left:1497px;top:443px;width:1px;height:3px;background:#bdbdbd;"></div>
<div class="t" style="left:1520.66px;width:40px;text-align:center;top:434.00px;font-size:9.0px;color:#bdbdbd;font-weight:400;white-space:nowrap;">00:58</div>
<div class="r" style="left:1540px;top:443px;width:1px;height:3px;background:#bdbdbd;"></div>
<div class="t" style="left:1563.70px;width:40px;text-align:center;top:434.00px;font-size:9.0px;color:#bdbdbd;font-weight:400;white-space:nowrap;">01:00</div>
<div class="r" style="left:1583px;top:443px;width:1px;height:3px;background:#bdbdbd;"></div>
</div>
<div class="r" style="left:2px;top:445px;width:292px;height:1px;background:#2e2e2e;"></div>
<div class="r" style="left:294px;top:446px;width:1289px;height:318px;background:#2f2f2f;"></div>
<div class="r" style="left:335px;top:446px;width:1px;height:310px;background:#474747;"></div>
<div class="r" style="left:378px;top:446px;width:1px;height:310px;background:#474747;"></div>
<div class="r" style="left:421px;top:446px;width:1px;height:310px;background:#474747;"></div>
<div class="r" style="left:464px;top:446px;width:1px;height:310px;background:#474747;"></div>
<div class="r" style="left:507px;top:446px;width:1px;height:310px;background:#474747;"></div>
<div class="r" style="left:550px;top:446px;width:1px;height:310px;background:#474747;"></div>
<div class="r" style="left:593px;top:446px;width:1px;height:310px;background:#474747;"></div>
<div class="r" style="left:636px;top:446px;width:1px;height:310px;background:#474747;"></div>
<div class="r" style="left:679px;top:446px;width:1px;height:310px;background:#474747;"></div>
<div class="r" style="left:722px;top:446px;width:1px;height:310px;background:#474747;"></div>
<div class="r" style="left:765px;top:446px;width:1px;height:310px;background:#474747;"></div>
<div class="r" style="left:808px;top:446px;width:1px;height:310px;background:#474747;"></div>
<div class="r" style="left:852px;top:446px;width:1px;height:310px;background:#474747;"></div>
<div class="r" style="left:895px;top:446px;width:1px;height:310px;background:#474747;"></div>
<div class="r" style="left:938px;top:446px;width:1px;height:310px;background:#474747;"></div>
<div class="r" style="left:981px;top:446px;width:1px;height:310px;background:#474747;"></div>
<div class="r" style="left:1024px;top:446px;width:1px;height:310px;background:#474747;"></div>
<div class="r" style="left:1067px;top:446px;width:1px;height:310px;background:#474747;"></div>
<div class="r" style="left:1110px;top:446px;width:1px;height:310px;background:#474747;"></div>
<div class="r" style="left:1153px;top:446px;width:1px;height:310px;background:#474747;"></div>
<div class="r" style="left:1196px;top:446px;width:1px;height:310px;background:#474747;"></div>
<div class="r" style="left:1239px;top:446px;width:1px;height:310px;background:#474747;"></div>
<div class="r" style="left:1282px;top:446px;width:1px;height:310px;background:#474747;"></div>
<div class="r" style="left:1325px;top:446px;width:1px;height:310px;background:#474747;"></div>
<div class="r" style="left:1368px;top:446px;width:1px;height:310px;background:#474747;"></div>
<div class="r" style="left:1411px;top:446px;width:1px;height:310px;background:#474747;"></div>
<div class="r" style="left:1454px;top:446px;width:1px;height:310px;background:#474747;"></div>
<div class="r" style="left:1497px;top:446px;width:1px;height:310px;background:#474747;"></div>
<div class="r" style="left:1540px;top:446px;width:1px;height:310px;background:#474747;"></div>
<svg class="r" style="left:4px;top:449.03499999999997px;" width="4" height="10" viewBox="0 0 4 10"><circle cx="2" cy="1.5" r="0.9" fill="#bbb"/><circle cx="2" cy="5" r="0.9" fill="#bbb"/><circle cx="2" cy="8.5" r="0.9" fill="#bbb"/></svg>
<svg class="r" style="left:11px;top:451.03499999999997px;" width="9" height="7" viewBox="0 0 9 7"><path d="M0.3 0.3H8.5L4.4 6.8Z" fill="#8e8e8e"/></svg>
<svg class="r" style="left:38px;top:448.23499999999996px;" width="11" height="10" viewBox="0 0 11 10"><rect x="0.2" y="4.5" width="6.8" height="5.4" fill="#a0a0a0"/><path d="M5.6 4.5V2.8a2.3 2.3 0 0 1 4.6 0V4.2" stroke="#a0a0a0" stroke-width="1.3" fill="none"/></svg>
<div class="t" style="left:51.90px;top:449.00px;font-size:9.6px;color:#2ba3c4;font-weight:400;white-space:nowrap;">Camera</div>
<div class="t" style="left:10.50px;top:466.00px;font-size:9.8px;color:#a0a0a0;font-weight:400;">position</div>
<div class="t" style="left:81.50px;top:466.00px;font-size:10px;color:#9a9a9a;font-weight:400;">x</div>
<div class="t" style="left:128.50px;top:466.00px;font-size:10px;color:#9a9a9a;font-weight:400;">y</div>
<div class="t" style="left:176.50px;top:466.00px;font-size:10px;color:#9a9a9a;font-weight:400;">z</div>
<div class="t" style="left:76.00px;width:40px;text-align:right;top:466.00px;font-size:9.6px;color:#e3a142;font-weight:400;">443</div>
<div class="r" style="left:89px;top:476px;width:27px;height:1px;background:#7a5a28;"></div>
<div class="t" style="left:124.00px;width:40px;text-align:right;top:466.00px;font-size:9.6px;color:#e3a142;font-weight:400;">90</div>
<div class="r" style="left:137px;top:476px;width:27px;height:1px;background:#7a5a28;"></div>
<div class="t" style="left:171.00px;width:40px;text-align:right;top:466.00px;font-size:9.6px;color:#e3a142;font-weight:400;">-358</div>
<div class="r" style="left:184px;top:476px;width:27px;height:1px;background:#7a5a28;"></div>
<svg class="r" style="left:254.5px;top:465.705px;" width="7" height="9" viewBox="0 0 7 9"><path d="M5 1L1.5 4.5L5 8" stroke="#dcdcdc" stroke-width="1.5" fill="none"/></svg>
<svg class="r" style="left:265px;top:464.505px;" width="13" height="11" viewBox="0 0 13 11"><circle cx="3.8" cy="7" r="2.8" stroke="#d640c4" stroke-width="1.6" fill="none"/><path d="M5.8 5L11.5 0.8M8.5 2.8l1.5 1.5M10.3 1.5l1.3 1.3" stroke="#d640c4" stroke-width="1.6" fill="none"/></svg>
<svg class="r" style="left:281px;top:465.705px;" width="7" height="9" viewBox="0 0 7 9"><path d="M1.5 1L5 4.5L1.5 8" stroke="#dcdcdc" stroke-width="1.5" fill="none"/></svg>
<div class="r" style="left:2px;top:478px;width:292px;height:1px;background:#2e2e2e;"></div>
<svg class="r" style="left:4px;top:482.375px;" width="4" height="10" viewBox="0 0 4 10"><circle cx="2" cy="1.5" r="0.9" fill="#bbb"/><circle cx="2" cy="5" r="0.9" fill="#bbb"/><circle cx="2" cy="8.5" r="0.9" fill="#bbb"/></svg>
<svg class="r" style="left:23px;top:482.775px;" width="12" height="10" viewBox="0 0 12 10"><path d="M0.3 4.5 C2 0.5 10.2 0.5 11.9 4.5 C10.2 8.5 2 8.5 0.3 4.5Z" fill="#e6e6e6"/><circle cx="6.1" cy="4.5" r="2.7" fill="none" stroke="#3a3a3a" stroke-width="1"/><circle cx="6.1" cy="4.5" r="1.7" fill="#dadada"/></svg>
<svg class="r" style="left:38px;top:481.575px;" width="11" height="10" viewBox="0 0 11 10"><rect x="0.2" y="4.5" width="6.8" height="5.4" fill="#a0a0a0"/><path d="M5.6 4.5V2.8a2.3 2.3 0 0 1 4.6 0V4.2" stroke="#a0a0a0" stroke-width="1.3" fill="none"/></svg>
<div class="t" style="left:51.90px;top:483.00px;font-size:9.95px;color:#dedede;font-weight:400;white-space:nowrap;">2024-12-01 10-42-32</div>
<div class="t" style="left:201.30px;width:40px;text-align:right;top:483.00px;font-size:10.1px;color:#e3a142;font-weight:400;">0</div>
<div class="r" style="left:214px;top:493px;width:27px;height:1px;background:#6a4a20;"></div>
<svg class="r" style="left:247px;top:484.875px;" width="11" height="6" viewBox="0 0 11 6"><path d="M0.5 3h1.5M3 3h1.5M5.5 3h3" stroke="#aaa" stroke-width="1"/><path d="M7.5 1L9.8 3L7.5 5" stroke="#aaa" stroke-width="1" fill="none"/></svg>
<div class="t" style="left:246.30px;width:40px;text-align:right;top:483.00px;font-size:10.1px;color:#e3a142;font-weight:400;">9054</div>
<div class="r" style="left:260px;top:493px;width:26px;height:1px;background:#6a4a20;"></div>
<div class="r" style="left:2px;top:495px;width:292px;height:1px;background:#2e2e2e;"></div>
<svg class="r" style="left:4px;top:499.04499999999996px;" width="4" height="10" viewBox="0 0 4 10"><circle cx="2" cy="1.5" r="0.9" fill="#bbb"/><circle cx="2" cy="5" r="0.9" fill="#bbb"/><circle cx="2" cy="8.5" r="0.9" fill="#bbb"/></svg>
<svg class="r" style="left:24px;top:498.54499999999996px;" width="11" height="11" viewBox="0 0 11 11"><path d="M3.3 8.7V1.8L9.5 0.8V7.6" stroke="#e0e0e0" stroke-width="1.2" fill="none"/><circle cx="2" cy="8.8" r="1.6" stroke="#e0e0e0" stroke-width="1.1" fill="none"/><circle cx="8.2" cy="8" r="1.6" stroke="#e0e0e0" stroke-width="1.1" fill="none"/></svg>
<svg class="r" style="left:38px;top:498.24499999999995px;" width="11" height="10" viewBox="0 0 11 10"><rect x="0.2" y="4.5" width="6.8" height="5.4" fill="#a0a0a0"/><path d="M5.6 4.5V2.8a2.3 2.3 0 0 1 4.6 0V4.2" stroke="#a0a0a0" stroke-width="1.3" fill="none"/></svg>
<div class="t" style="left:51.90px;top:499.00px;font-size:9.95px;color:#dedede;font-weight:400;white-space:nowrap;">2024-12-01 10-42-32 (audio tr...</div>
<div class="t" style="left:201.30px;width:40px;text-align:right;top:499.00px;font-size:10.1px;color:#e3a142;font-weight:400;">0</div>
<div class="r" style="left:214px;top:509px;width:27px;height:1px;background:#6a4a20;"></div>
<svg class="r" style="left:247px;top:501.54499999999996px;" width="11" height="6" viewBox="0 0 11 6"><path d="M0.5 3h1.5M3 3h1.5M5.5 3h3" stroke="#aaa" stroke-width="1"/><path d="M7.5 1L9.8 3L7.5 5" stroke="#aaa" stroke-width="1" fill="none"/></svg>
<div class="t" style="left:246.30px;width:40px;text-align:right;top:499.00px;font-size:10.1px;color:#e3a142;font-weight:400;">9054</div>
<div class="r" style="left:260px;top:509px;width:26px;height:1px;background:#6a4a20;"></div>
<div class="r" style="left:2px;top:511px;width:292px;height:1px;background:#2e2e2e;"></div>
<svg class="r" style="left:4px;top:515.7149999999999px;" width="4" height="10" viewBox="0 0 4 10"><circle cx="2" cy="1.5" r="0.9" fill="#bbb"/><circle cx="2" cy="5" r="0.9" fill="#bbb"/><circle cx="2" cy="8.5" r="0.9" fill="#bbb"/></svg>
<svg class="r" style="left:11px;top:517.7149999999999px;" width="9" height="7" viewBox="0 0 9 7"><path d="M0.3 0.3H8.5L4.4 6.8Z" fill="#8e8e8e"/></svg>
<svg class="r" style="left:23px;top:516.1149999999999px;" width="12" height="10" viewBox="0 0 12 10"><path d="M0.3 4.5 C2 0.5 10.2 0.5 11.9 4.5 C10.2 8.5 2 8.5 0.3 4.5Z" fill="#e6e6e6"/><circle cx="6.1" cy="4.5" r="2.7" fill="none" stroke="#3a3a3a" stroke-width="1"/><circle cx="6.1" cy="4.5" r="1.7" fill="#dadada"/></svg>
<svg class="r" style="left:38px;top:514.915px;" width="11" height="10" viewBox="0 0 11 10"><rect x="0.2" y="4.5" width="6.8" height="5.4" fill="#a0a0a0"/><path d="M5.6 4.5V2.8a2.3 2.3 0 0 1 4.6 0V4.2" stroke="#a0a0a0" stroke-width="1.3" fill="none"/></svg>
<div class="t" style="left:51.90px;top:516.00px;font-size:9.6px;color:#dedede;font-weight:400;white-space:nowrap;">Painel</div>
<div class="t" style="left:201.30px;width:40px;text-align:right;top:516.00px;font-size:10.1px;color:#e3a142;font-weight:400;">0</div>
<div class="r" style="left:214px;top:526px;width:27px;height:1px;background:#6a4a20;"></div>
<svg class="r" style="left:247px;top:518.2149999999999px;" width="11" height="6" viewBox="0 0 11 6"><path d="M0.5 3h1.5M3 3h1.5M5.5 3h3" stroke="#aaa" stroke-width="1"/><path d="M7.5 1L9.8 3L7.5 5" stroke="#aaa" stroke-width="1" fill="none"/></svg>
<div class="t" style="left:246.30px;width:40px;text-align:right;top:516.00px;font-size:10.1px;color:#e3a142;font-weight:400;">1800</div>
<div class="r" style="left:260px;top:526px;width:26px;height:1px;background:#6a4a20;"></div>
<div class="t" style="left:10.50px;top:533.00px;font-size:9.8px;color:#a0a0a0;font-weight:400;">position</div>
<div class="t" style="left:81.50px;top:533.00px;font-size:10px;color:#9a9a9a;font-weight:400;">x</div>
<div class="t" style="left:128.50px;top:533.00px;font-size:10px;color:#9a9a9a;font-weight:400;">y</div>
<div class="t" style="left:176.50px;top:533.00px;font-size:10px;color:#9a9a9a;font-weight:400;">z</div>
<div class="t" style="left:76.00px;width:40px;text-align:right;top:533.00px;font-size:9.6px;color:#e3a142;font-weight:400;">383</div>
<div class="r" style="left:89px;top:543px;width:27px;height:1px;background:#7a5a28;"></div>
<div class="t" style="left:124.00px;width:40px;text-align:right;top:533.00px;font-size:9.6px;color:#e3a142;font-weight:400;">25</div>
<div class="r" style="left:137px;top:543px;width:27px;height:1px;background:#7a5a28;"></div>
<div class="t" style="left:171.00px;width:40px;text-align:right;top:533.00px;font-size:9.6px;color:#e3a142;font-weight:400;">46</div>
<div class="r" style="left:184px;top:543px;width:27px;height:1px;background:#7a5a28;"></div>
<svg class="r" style="left:254.5px;top:532.385px;" width="7" height="9" viewBox="0 0 7 9"><path d="M5 1L1.5 4.5L5 8" stroke="#dcdcdc" stroke-width="1.5" fill="none"/></svg>
<svg class="r" style="left:265px;top:531.185px;" width="13" height="11" viewBox="0 0 13 11"><circle cx="3.8" cy="7" r="2.8" stroke="#d640c4" stroke-width="1.6" fill="none"/><path d="M5.8 5L11.5 0.8M8.5 2.8l1.5 1.5M10.3 1.5l1.3 1.3" stroke="#d640c4" stroke-width="1.6" fill="none"/></svg>
<svg class="r" style="left:281px;top:532.385px;" width="7" height="9" viewBox="0 0 7 9"><path d="M1.5 1L5 4.5L1.5 8" stroke="#dcdcdc" stroke-width="1.5" fill="none"/></svg>
<div class="r" style="left:2px;top:545px;width:292px;height:1px;background:#2e2e2e;"></div>
<svg class="r" style="left:4px;top:549.0550000000001px;" width="4" height="10" viewBox="0 0 4 10"><circle cx="2" cy="1.5" r="0.9" fill="#bbb"/><circle cx="2" cy="5" r="0.9" fill="#bbb"/><circle cx="2" cy="8.5" r="0.9" fill="#bbb"/></svg>
<svg class="r" style="left:11px;top:551.0550000000001px;" width="9" height="7" viewBox="0 0 9 7"><path d="M0.3 0.3H8.5L4.4 6.8Z" fill="#8e8e8e"/></svg>
<svg class="r" style="left:23px;top:549.455px;" width="12" height="10" viewBox="0 0 12 10"><path d="M0.3 4.5 C2 0.5 10.2 0.5 11.9 4.5 C10.2 8.5 2 8.5 0.3 4.5Z" fill="#e6e6e6"/><circle cx="6.1" cy="4.5" r="2.7" fill="none" stroke="#3a3a3a" stroke-width="1"/><circle cx="6.1" cy="4.5" r="1.7" fill="#dadada"/></svg>
<svg class="r" style="left:38px;top:548.2550000000001px;" width="11" height="10" viewBox="0 0 11 10"><rect x="0.2" y="4.5" width="6.8" height="5.4" fill="#a0a0a0"/><path d="M5.6 4.5V2.8a2.3 2.3 0 0 1 4.6 0V4.2" stroke="#a0a0a0" stroke-width="1.3" fill="none"/></svg>
<div class="t" style="left:51.90px;top:549.00px;font-size:9.6px;color:#dedede;font-weight:400;white-space:nowrap;">Braço</div>
<div class="t" style="left:201.30px;width:40px;text-align:right;top:549.00px;font-size:10.1px;color:#e3a142;font-weight:400;">0</div>
<div class="r" style="left:214px;top:559px;width:27px;height:1px;background:#6a4a20;"></div>
<svg class="r" style="left:247px;top:551.5550000000001px;" width="11" height="6" viewBox="0 0 11 6"><path d="M0.5 3h1.5M3 3h1.5M5.5 3h3" stroke="#aaa" stroke-width="1"/><path d="M7.5 1L9.8 3L7.5 5" stroke="#aaa" stroke-width="1" fill="none"/></svg>
<div class="t" style="left:246.30px;width:40px;text-align:right;top:549.00px;font-size:10.1px;color:#e3a142;font-weight:400;">1800</div>
<div class="r" style="left:260px;top:559px;width:26px;height:1px;background:#6a4a20;"></div>
<div class="t" style="left:10.50px;top:566.00px;font-size:9.8px;color:#a0a0a0;font-weight:400;">position</div>
<div class="t" style="left:81.50px;top:566.00px;font-size:10px;color:#9a9a9a;font-weight:400;">x</div>
<div class="t" style="left:128.50px;top:566.00px;font-size:10px;color:#9a9a9a;font-weight:400;">y</div>
<div class="t" style="left:176.50px;top:566.00px;font-size:10px;color:#9a9a9a;font-weight:400;">z</div>
<div class="t" style="left:76.00px;width:40px;text-align:right;top:566.00px;font-size:9.6px;color:#a57a3a;font-weight:400;">594</div>
<div class="t" style="left:124.00px;width:40px;text-align:right;top:566.00px;font-size:9.6px;color:#a57a3a;font-weight:400;">-46</div>
<div class="t" style="left:171.00px;width:40px;text-align:right;top:566.00px;font-size:9.6px;color:#a57a3a;font-weight:400;">85</div>
<svg class="r" style="left:254.5px;top:565.7249999999999px;" width="7" height="9" viewBox="0 0 7 9"><path d="M5 1L1.5 4.5L5 8" stroke="#dcdcdc" stroke-width="1.5" fill="none"/></svg>
<svg class="r" style="left:265px;top:564.5249999999999px;" width="13" height="11" viewBox="0 0 13 11"><circle cx="3.8" cy="7" r="2.8" stroke="#8a8a8a" stroke-width="1.6" fill="none"/><path d="M5.8 5L11.5 0.8M8.5 2.8l1.5 1.5M10.3 1.5l1.3 1.3" stroke="#8a8a8a" stroke-width="1.6" fill="none"/></svg>
<svg class="r" style="left:281px;top:565.7249999999999px;" width="7" height="9" viewBox="0 0 7 9"><path d="M1.5 1L5 4.5L1.5 8" stroke="#dcdcdc" stroke-width="1.5" fill="none"/></svg>
<div class="t" style="left:10.50px;top:583.00px;font-size:9.8px;color:#a0a0a0;font-weight:400;">rotation</div>
<div class="t" style="left:81.50px;top:583.00px;font-size:10px;color:#9a9a9a;font-weight:400;">x</div>
<div class="t" style="left:128.50px;top:583.00px;font-size:10px;color:#9a9a9a;font-weight:400;">y</div>
<div class="t" style="left:176.50px;top:583.00px;font-size:10px;color:#9a9a9a;font-weight:400;">z</div>
<div class="t" style="left:76.00px;width:40px;text-align:right;top:583.00px;font-size:9.6px;color:#a57a3a;font-weight:400;">0</div>
<div class="t" style="left:124.00px;width:40px;text-align:right;top:583.00px;font-size:9.6px;color:#a57a3a;font-weight:400;">0</div>
<div class="t" style="left:171.00px;width:40px;text-align:right;top:583.00px;font-size:9.6px;color:#a57a3a;font-weight:400;">1</div>
<svg class="r" style="left:254.5px;top:582.395px;" width="7" height="9" viewBox="0 0 7 9"><path d="M5 1L1.5 4.5L5 8" stroke="#dcdcdc" stroke-width="1.5" fill="none"/></svg>
<svg class="r" style="left:265px;top:581.1949999999999px;" width="13" height="11" viewBox="0 0 13 11"><circle cx="3.8" cy="7" r="2.8" stroke="#8a8a8a" stroke-width="1.6" fill="none"/><path d="M5.8 5L11.5 0.8M8.5 2.8l1.5 1.5M10.3 1.5l1.3 1.3" stroke="#8a8a8a" stroke-width="1.6" fill="none"/></svg>
<svg class="r" style="left:281px;top:582.395px;" width="7" height="9" viewBox="0 0 7 9"><path d="M1.5 1L5 4.5L1.5 8" stroke="#dcdcdc" stroke-width="1.5" fill="none"/></svg>
<div class="r" style="left:2px;top:595px;width:292px;height:1px;background:#2e2e2e;"></div>
<svg class="r" style="left:4px;top:599.065px;" width="4" height="10" viewBox="0 0 4 10"><circle cx="2" cy="1.5" r="0.9" fill="#bbb"/><circle cx="2" cy="5" r="0.9" fill="#bbb"/><circle cx="2" cy="8.5" r="0.9" fill="#bbb"/></svg>
<svg class="r" style="left:11px;top:601.065px;" width="9" height="7" viewBox="0 0 9 7"><path d="M0.3 0.3H8.5L4.4 6.8Z" fill="#8e8e8e"/></svg>
<svg class="r" style="left:23px;top:599.465px;" width="12" height="10" viewBox="0 0 12 10"><path d="M0.3 4.5 C2 0.5 10.2 0.5 11.9 4.5 C10.2 8.5 2 8.5 0.3 4.5Z" fill="#e6e6e6"/><circle cx="6.1" cy="4.5" r="2.7" fill="none" stroke="#3a3a3a" stroke-width="1"/><circle cx="6.1" cy="4.5" r="1.7" fill="#dadada"/></svg>
<svg class="r" style="left:38px;top:598.2650000000001px;" width="11" height="10" viewBox="0 0 11 10"><rect x="0.2" y="4.5" width="6.8" height="5.4" fill="#a0a0a0"/><path d="M5.6 4.5V2.8a2.3 2.3 0 0 1 4.6 0V4.2" stroke="#a0a0a0" stroke-width="1.3" fill="none"/></svg>
<div class="t" style="left:51.90px;top:599.00px;font-size:9.6px;color:#dedede;font-weight:400;white-space:nowrap;">gola</div>
<div class="t" style="left:201.30px;width:40px;text-align:right;top:599.00px;font-size:10.1px;color:#e3a142;font-weight:400;">0</div>
<div class="r" style="left:214px;top:609px;width:27px;height:1px;background:#6a4a20;"></div>
<svg class="r" style="left:247px;top:601.565px;" width="11" height="6" viewBox="0 0 11 6"><path d="M0.5 3h1.5M3 3h1.5M5.5 3h3" stroke="#aaa" stroke-width="1"/><path d="M7.5 1L9.8 3L7.5 5" stroke="#aaa" stroke-width="1" fill="none"/></svg>
<div class="t" style="left:246.30px;width:40px;text-align:right;top:599.00px;font-size:10.1px;color:#e3a142;font-weight:400;">1800</div>
<div class="r" style="left:260px;top:609px;width:26px;height:1px;background:#6a4a20;"></div>
<div class="t" style="left:10.50px;top:616.00px;font-size:9.8px;color:#a0a0a0;font-weight:400;">position</div>
<div class="t" style="left:81.50px;top:616.00px;font-size:10px;color:#9a9a9a;font-weight:400;">x</div>
<div class="t" style="left:128.50px;top:616.00px;font-size:10px;color:#9a9a9a;font-weight:400;">y</div>
<div class="t" style="left:176.50px;top:616.00px;font-size:10px;color:#9a9a9a;font-weight:400;">z</div>
<div class="t" style="left:76.00px;width:40px;text-align:right;top:616.00px;font-size:9.6px;color:#a57a3a;font-weight:400;">597</div>
<div class="t" style="left:124.00px;width:40px;text-align:right;top:616.00px;font-size:9.6px;color:#a57a3a;font-weight:400;">-54</div>
<div class="t" style="left:171.00px;width:40px;text-align:right;top:616.00px;font-size:9.6px;color:#a57a3a;font-weight:400;">107</div>
<svg class="r" style="left:254.5px;top:615.7349999999999px;" width="7" height="9" viewBox="0 0 7 9"><path d="M5 1L1.5 4.5L5 8" stroke="#dcdcdc" stroke-width="1.5" fill="none"/></svg>
<svg class="r" style="left:265px;top:614.5349999999999px;" width="13" height="11" viewBox="0 0 13 11"><circle cx="3.8" cy="7" r="2.8" stroke="#8a8a8a" stroke-width="1.6" fill="none"/><path d="M5.8 5L11.5 0.8M8.5 2.8l1.5 1.5M10.3 1.5l1.3 1.3" stroke="#8a8a8a" stroke-width="1.6" fill="none"/></svg>
<svg class="r" style="left:281px;top:615.7349999999999px;" width="7" height="9" viewBox="0 0 7 9"><path d="M1.5 1L5 4.5L1.5 8" stroke="#dcdcdc" stroke-width="1.5" fill="none"/></svg>
<div class="r" style="left:2px;top:628px;width:292px;height:1px;background:#2e2e2e;"></div>
<svg class="r" style="left:4px;top:632.405px;" width="4" height="10" viewBox="0 0 4 10"><circle cx="2" cy="1.5" r="0.9" fill="#bbb"/><circle cx="2" cy="5" r="0.9" fill="#bbb"/><circle cx="2" cy="8.5" r="0.9" fill="#bbb"/></svg>
<svg class="r" style="left:11px;top:634.405px;" width="9" height="7" viewBox="0 0 9 7"><path d="M0.3 0.3H8.5L4.4 6.8Z" fill="#8e8e8e"/></svg>
<svg class="r" style="left:23px;top:632.805px;" width="12" height="10" viewBox="0 0 12 10"><path d="M0.3 4.5 C2 0.5 10.2 0.5 11.9 4.5 C10.2 8.5 2 8.5 0.3 4.5Z" fill="#e6e6e6"/><circle cx="6.1" cy="4.5" r="2.7" fill="none" stroke="#3a3a3a" stroke-width="1"/><circle cx="6.1" cy="4.5" r="1.7" fill="#dadada"/></svg>
<svg class="r" style="left:38px;top:631.605px;" width="11" height="10" viewBox="0 0 11 10"><rect x="0.2" y="4.5" width="6.8" height="5.4" fill="#a0a0a0"/><path d="M5.6 4.5V2.8a2.3 2.3 0 0 1 4.6 0V4.2" stroke="#a0a0a0" stroke-width="1.3" fill="none"/></svg>
<div class="t" style="left:51.90px;top:633.00px;font-size:9.6px;color:#dedede;font-weight:400;white-space:nowrap;">Cabeça</div>
<div class="t" style="left:201.30px;width:40px;text-align:right;top:633.00px;font-size:10.1px;color:#e3a142;font-weight:400;">0</div>
<div class="r" style="left:214px;top:643px;width:27px;height:1px;background:#6a4a20;"></div>
<svg class="r" style="left:247px;top:634.905px;" width="11" height="6" viewBox="0 0 11 6"><path d="M0.5 3h1.5M3 3h1.5M5.5 3h3" stroke="#aaa" stroke-width="1"/><path d="M7.5 1L9.8 3L7.5 5" stroke="#aaa" stroke-width="1" fill="none"/></svg>
<div class="t" style="left:246.30px;width:40px;text-align:right;top:633.00px;font-size:10.1px;color:#e3a142;font-weight:400;">1800</div>
<div class="r" style="left:260px;top:643px;width:26px;height:1px;background:#6a4a20;"></div>
<div class="t" style="left:10.50px;top:649.00px;font-size:9.8px;color:#a0a0a0;font-weight:400;">position</div>
<div class="t" style="left:81.50px;top:649.00px;font-size:10px;color:#9a9a9a;font-weight:400;">x</div>
<div class="t" style="left:128.50px;top:649.00px;font-size:10px;color:#9a9a9a;font-weight:400;">y</div>
<div class="t" style="left:176.50px;top:649.00px;font-size:10px;color:#9a9a9a;font-weight:400;">z</div>
<div class="t" style="left:76.00px;width:40px;text-align:right;top:649.00px;font-size:9.6px;color:#a57a3a;font-weight:400;">609</div>
<div class="t" style="left:124.00px;width:40px;text-align:right;top:649.00px;font-size:9.6px;color:#a57a3a;font-weight:400;">-68</div>
<div class="t" style="left:171.00px;width:40px;text-align:right;top:649.00px;font-size:9.6px;color:#a57a3a;font-weight:400;">133</div>
<svg class="r" style="left:254.5px;top:649.075px;" width="7" height="9" viewBox="0 0 7 9"><path d="M5 1L1.5 4.5L5 8" stroke="#dcdcdc" stroke-width="1.5" fill="none"/></svg>
<svg class="r" style="left:265px;top:647.875px;" width="13" height="11" viewBox="0 0 13 11"><circle cx="3.8" cy="7" r="2.8" stroke="#8a8a8a" stroke-width="1.6" fill="none"/><path d="M5.8 5L11.5 0.8M8.5 2.8l1.5 1.5M10.3 1.5l1.3 1.3" stroke="#8a8a8a" stroke-width="1.6" fill="none"/></svg>
<svg class="r" style="left:281px;top:649.075px;" width="7" height="9" viewBox="0 0 7 9"><path d="M1.5 1L5 4.5L1.5 8" stroke="#dcdcdc" stroke-width="1.5" fill="none"/></svg>
<div class="t" style="left:10.50px;top:666.00px;font-size:9.8px;color:#a0a0a0;font-weight:400;">rotation</div>
<div class="t" style="left:81.50px;top:666.00px;font-size:10px;color:#9a9a9a;font-weight:400;">x</div>
<div class="t" style="left:128.50px;top:666.00px;font-size:10px;color:#9a9a9a;font-weight:400;">y</div>
<div class="t" style="left:176.50px;top:666.00px;font-size:10px;color:#9a9a9a;font-weight:400;">z</div>
<div class="t" style="left:76.00px;width:40px;text-align:right;top:666.00px;font-size:9.6px;color:#a57a3a;font-weight:400;">1,2</div>
<div class="t" style="left:124.00px;width:40px;text-align:right;top:666.00px;font-size:9.6px;color:#a57a3a;font-weight:400;">-14</div>
<div class="t" style="left:171.00px;width:40px;text-align:right;top:666.00px;font-size:9.6px;color:#a57a3a;font-weight:400;">-5</div>
<svg class="r" style="left:254.5px;top:665.7450000000001px;" width="7" height="9" viewBox="0 0 7 9"><path d="M5 1L1.5 4.5L5 8" stroke="#dcdcdc" stroke-width="1.5" fill="none"/></svg>
<svg class="r" style="left:265px;top:664.5450000000001px;" width="13" height="11" viewBox="0 0 13 11"><circle cx="3.8" cy="7" r="2.8" stroke="#8a8a8a" stroke-width="1.6" fill="none"/><path d="M5.8 5L11.5 0.8M8.5 2.8l1.5 1.5M10.3 1.5l1.3 1.3" stroke="#8a8a8a" stroke-width="1.6" fill="none"/></svg>
<svg class="r" style="left:281px;top:665.7450000000001px;" width="7" height="9" viewBox="0 0 7 9"><path d="M1.5 1L5 4.5L1.5 8" stroke="#dcdcdc" stroke-width="1.5" fill="none"/></svg>
<div class="r" style="left:2px;top:678px;width:292px;height:1px;background:#2e2e2e;"></div>
<svg class="r" style="left:4px;top:682.415px;" width="4" height="10" viewBox="0 0 4 10"><circle cx="2" cy="1.5" r="0.9" fill="#bbb"/><circle cx="2" cy="5" r="0.9" fill="#bbb"/><circle cx="2" cy="8.5" r="0.9" fill="#bbb"/></svg>
<svg class="r" style="left:23px;top:682.8149999999999px;" width="12" height="10" viewBox="0 0 12 10"><path d="M0.3 4.5 C2 0.5 10.2 0.5 11.9 4.5 C10.2 8.5 2 8.5 0.3 4.5Z" fill="#e6e6e6"/><circle cx="6.1" cy="4.5" r="2.7" fill="none" stroke="#3a3a3a" stroke-width="1"/><circle cx="6.1" cy="4.5" r="1.7" fill="#dadada"/></svg>
<svg class="r" style="left:38px;top:681.615px;" width="11" height="10" viewBox="0 0 11 10"><rect x="0.2" y="4.5" width="6.8" height="5.4" fill="#a0a0a0"/><path d="M5.6 4.5V2.8a2.3 2.3 0 0 1 4.6 0V4.2" stroke="#a0a0a0" stroke-width="1.3" fill="none"/></svg>
<div class="t" style="left:51.90px;top:683.00px;font-size:9.6px;color:#dedede;font-weight:400;white-space:nowrap;">Corpo</div>
<div class="t" style="left:201.30px;width:40px;text-align:right;top:683.00px;font-size:10.1px;color:#e3a142;font-weight:400;">0</div>
<div class="r" style="left:214px;top:693px;width:27px;height:1px;background:#6a4a20;"></div>
<svg class="r" style="left:247px;top:684.915px;" width="11" height="6" viewBox="0 0 11 6"><path d="M0.5 3h1.5M3 3h1.5M5.5 3h3" stroke="#aaa" stroke-width="1"/><path d="M7.5 1L9.8 3L7.5 5" stroke="#aaa" stroke-width="1" fill="none"/></svg>
<div class="t" style="left:246.30px;width:40px;text-align:right;top:683.00px;font-size:10.1px;color:#e3a142;font-weight:400;">1800</div>
<div class="r" style="left:260px;top:693px;width:26px;height:1px;background:#6a4a20;"></div>
<div class="r" style="left:2px;top:695px;width:292px;height:1px;background:#2e2e2e;"></div>
<div class="r" style="left:0;top:0;width:1600px;height:772px;clip-path:inset(446px 17px 8px 294px);"><div class="r" style="left:294px;top:446px;width:1289px;height:16px;background:#676767;"></div>
<div class="r" style="left:294px;top:446px;width:1289px;height:1px;background:#7a7a7a;"></div>
<svg class="r" style="left:295px;top:448.53499999999997px;" width="13" height="11" viewBox="0 0 13 11"><circle cx="3" cy="2.5" r="2" stroke="#e8e8e8" stroke-width="1.1" fill="none"/><circle cx="7.3" cy="2.5" r="2" stroke="#e8e8e8" stroke-width="1.1" fill="none"/><rect x="0.8" y="5" width="8.5" height="5.3" stroke="#e8e8e8" stroke-width="1.1" fill="none"/><path d="M9.5 7.5L12.5 5.5V10L9.5 8.5" fill="#e8e8e8"/></svg>
<div class="r" style="left:287.2px;top:466.2px;width:9px;height:9px;border-radius:3.8px;background:#e6e6e6;"></div>
<div class="r" style="left:969.5px;top:466.2px;width:9px;height:9px;border-radius:3.8px;background:#e6e6e6;"></div>
<div class="r" style="left:1576.5px;top:466.2px;width:9px;height:9px;border-radius:3.8px;background:#e6e6e6;"></div>
<div class="r" style="left:294px;top:479px;width:1289px;height:17px;background:#929292;"></div>
<div class="r" style="left:294px;top:479px;width:1289px;height:1px;background:#a2a2a2;"></div>
<div class="r" style="left:294px;top:480px;width:24px;height:15px;border-radius:3px;background:linear-gradient(120deg,#5a4a30,#8a7a5a 40%,#6a5a40 70%,#9a8a6a);"></div>
<div class="r" style="left:294px;top:496px;width:1289px;height:16px;background:#929292;"></div>
<div class="r" style="left:294px;top:495px;width:1289px;height:1px;background:#5a5a5a;"></div>
<div class="r" style="left:294px;top:496px;width:1289px;height:1px;background:#a8a8a8;"></div>
<svg class="r" style="left:296px;top:498.04499999999996px;" width="11" height="11" viewBox="0 0 11 11"><path d="M3.3 8.7V1.8L9.5 0.8V7.6" stroke="#5a5a5a" stroke-width="1" fill="none"/><circle cx="2" cy="8.8" r="1.6" stroke="#5a5a5a" stroke-width="1" fill="none"/><circle cx="8.2" cy="8" r="1.6" stroke="#5a5a5a" stroke-width="1" fill="none"/></svg>
<div class="r" style="left:294px;top:512px;width:1289px;height:17px;background:#929292;"></div>
<div class="r" style="left:294px;top:512px;width:1289px;height:1px;background:#a2a2a2;"></div>
<div class="r" style="left:294px;top:513px;width:8px;height:15px;border-radius:1px;background:linear-gradient(160deg,#7ad8ee,#3ab0d0);"></div>
<div class="r" style="left:287.2px;top:532.9px;width:9px;height:9px;border-radius:3.8px;background:#e6e6e6;"></div>
<div class="r" style="left:373.6px;top:532.9px;width:9px;height:9px;border-radius:3.8px;background:#e6e6e6;"></div>
<div class="r" style="left:458.0px;top:532.9px;width:9px;height:9px;border-radius:3.8px;background:#e6e6e6;"></div>
<div class="r" style="left:546.1px;top:532.9px;width:9px;height:9px;border-radius:3.8px;background:#e6e6e6;"></div>
<div class="r" style="left:633.1px;top:532.9px;width:9px;height:9px;border-radius:3.8px;background:#e6e6e6;"></div>
<div class="r" style="left:715.6px;top:532.9px;width:9px;height:9px;border-radius:3.8px;background:#e6e6e6;"></div>
<div class="r" style="left:807.8px;top:532.9px;width:9px;height:9px;border-radius:3.8px;background:#e6e6e6;"></div>
<div class="r" style="left:906.6px;top:532.9px;width:9px;height:9px;border-radius:3.8px;background:#e6e6e6;"></div>
<div class="r" style="left:1009.4px;top:532.9px;width:9px;height:9px;border-radius:3.8px;background:#e6e6e6;"></div>
<div class="r" style="left:1105.3px;top:532.9px;width:9px;height:9px;border-radius:3.8px;background:#e6e6e6;"></div>
<div class="r" style="left:1190.5px;top:532.9px;width:9px;height:9px;border-radius:3.8px;background:#e6e6e6;"></div>
<div class="r" style="left:1278.9px;top:532.9px;width:9px;height:9px;border-radius:3.8px;background:#e6e6e6;"></div>
<div class="r" style="left:1360.7px;top:532.9px;width:9px;height:9px;border-radius:3.8px;background:#e6e6e6;"></div>
<div class="r" style="left:1449.2px;top:532.9px;width:9px;height:9px;border-radius:3.8px;background:#e6e6e6;"></div>
<div class="r" style="left:1577.2px;top:532.9px;width:9px;height:9px;border-radius:3.8px;background:#e6e6e6;"></div>
<div class="r" style="left:294px;top:546px;width:1289px;height:16px;background:#929292;"></div>
<div class="r" style="left:294px;top:546px;width:1289px;height:1px;background:#a2a2a2;"></div>
<div class="r" style="left:294px;top:547px;width:8px;height:14px;border-radius:2px;background:#7e7e7e;"></div>
<div class="r" style="left:287.2px;top:566.2px;width:9px;height:9px;border-radius:3.8px;background:#e6e6e6;"></div>
<div class="r" style="left:373.6px;top:566.2px;width:9px;height:9px;border-radius:3.8px;background:#e6e6e6;"></div>
<div class="r" style="left:459.1px;top:566.2px;width:9px;height:9px;border-radius:3.8px;background:#e6e6e6;"></div>
<div class="r" style="left:546.1px;top:566.2px;width:9px;height:9px;border-radius:3.8px;background:#e6e6e6;"></div>
<div class="r" style="left:629.7px;top:566.2px;width:9px;height:9px;border-radius:3.8px;background:#e6e6e6;"></div>
<div class="r" style="left:716.7px;top:566.2px;width:9px;height:9px;border-radius:3.8px;background:#e6e6e6;"></div>
<div class="r" style="left:804.1px;top:566.2px;width:9px;height:9px;border-radius:3.8px;background:#e6e6e6;"></div>
<div class="r" style="left:905.1px;top:566.2px;width:9px;height:9px;border-radius:3.8px;background:#e6e6e6;"></div>
<div class="r" style="left:1007.5px;top:566.2px;width:9px;height:9px;border-radius:3.8px;background:#e6e6e6;"></div>
<div class="r" style="left:287.2px;top:582.9px;width:9px;height:9px;border-radius:3.8px;background:#e6e6e6;"></div>
<div class="r" style="left:373.6px;top:582.9px;width:9px;height:9px;border-radius:3.8px;background:#e6e6e6;"></div>
<div class="r" style="left:459.1px;top:582.9px;width:9px;height:9px;border-radius:3.8px;background:#e6e6e6;"></div>
<div class="r" style="left:546.1px;top:582.9px;width:9px;height:9px;border-radius:3.8px;background:#e6e6e6;"></div>
<div class="r" style="left:629.7px;top:582.9px;width:9px;height:9px;border-radius:3.8px;background:#e6e6e6;"></div>
<div class="r" style="left:716.7px;top:582.9px;width:9px;height:9px;border-radius:3.8px;background:#e6e6e6;"></div>
<div class="r" style="left:804.1px;top:582.9px;width:9px;height:9px;border-radius:3.8px;background:#e6e6e6;"></div>
<div class="r" style="left:905.1px;top:582.9px;width:9px;height:9px;border-radius:3.8px;background:#e6e6e6;"></div>
<div class="r" style="left:1007.5px;top:582.9px;width:9px;height:9px;border-radius:3.8px;background:#e6e6e6;"></div>
<div class="r" style="left:294px;top:596px;width:1289px;height:16px;background:#929292;"></div>
<div class="r" style="left:294px;top:596px;width:1289px;height:1px;background:#a2a2a2;"></div>
<div class="r" style="left:294px;top:597px;width:8px;height:14px;border-radius:2px;background:#7e7e7e;"></div>
<div class="r" style="left:716.7px;top:616.2px;width:9px;height:9px;border-radius:3.8px;background:#e6e6e6;"></div>
<div class="r" style="left:970.4px;top:616.2px;width:9px;height:9px;border-radius:3.8px;background:#e6e6e6;"></div>
<div class="r" style="left:294px;top:629px;width:1289px;height:17px;background:#929292;"></div>
<div class="r" style="left:294px;top:629px;width:1289px;height:1px;background:#a2a2a2;"></div>
<div class="r" style="left:294px;top:630px;width:8px;height:15px;border-radius:2px;background:#7e7e7e;"></div>
<div class="r" style="left:287.2px;top:649.6px;width:9px;height:9px;border-radius:3.8px;background:#e6e6e6;"></div>
<div class="r" style="left:546.1px;top:649.6px;width:9px;height:9px;border-radius:3.8px;background:#e6e6e6;"></div>
<div class="r" style="left:794.3px;top:649.6px;width:9px;height:9px;border-radius:3.8px;background:#e6e6e6;"></div>
<div class="r" style="left:1068.6px;top:649.6px;width:9px;height:9px;border-radius:3.8px;background:#e6e6e6;"></div>
<div class="r" style="left:287.2px;top:666.2px;width:9px;height:9px;border-radius:3.8px;background:#e6e6e6;"></div>
<div class="r" style="left:546.1px;top:666.2px;width:9px;height:9px;border-radius:3.8px;background:#e6e6e6;"></div>
<div class="r" style="left:795.8px;top:666.2px;width:9px;height:9px;border-radius:3.8px;background:#e6e6e6;"></div>
<div class="r" style="left:1069.4px;top:666.2px;width:9px;height:9px;border-radius:3.8px;background:#e6e6e6;"></div>
<div class="r" style="left:294px;top:679px;width:1289px;height:17px;background:#929292;"></div>
<div class="r" style="left:294px;top:679px;width:1289px;height:1px;background:#a2a2a2;"></div>
<div class="r" style="left:294px;top:680px;width:8px;height:15px;border-radius:2px;background:linear-gradient(100deg,#20303a,#a8d8e8 40%,#101820 70%);"></div></div>
<svg class="r" style="left:0;top:0" width="1600" height="772"><polygon points="294,511.9 294,510.8 295,510.3 296,510.7 297,511.0 298,510.5 299,511.0 300,511.0 301,509.6 302,510.1 303,510.4 304,509.4 305,509.4 306,510.8 307,511.0 308,510.5 309,510.4 310,510.4 311,510.3 312,509.4 313,509.4 314,510.1 315,510.0 316,509.0 317,508.6 318,508.2 319,510.2 320,507.9 321,507.5 322,509.7 323,507.7 324,509.5 325,506.7 326,509.2 327,504.6 328,506.7 329,507.3 330,508.5 331,508.6 332,508.6 333,508.1 334,504.9 335,507.5 336,507.7 337,504.8 338,508.0 339,507.4 340,504.6 341,506.7 342,507.5 343,506.6 344,505.7 345,502.1 346,504.0 347,506.2 348,501.4 349,505.4 350,501.9 351,505.4 352,500.4 353,503.4 354,506.0 355,504.4 356,504.0 357,501.5 358,504.9 359,505.8 360,502.3 361,502.1 362,500.1 363,506.6 364,503.8 365,505.7 366,503.2 367,504.8 368,501.0 369,503.0 370,498.3 371,507.3 372,503.5 373,507.5 374,505.1 375,506.1 376,507.6 377,504.3 378,504.6 379,504.5 380,506.8 381,504.6 382,506.9 383,505.2 384,506.4 385,506.8 386,508.9 387,505.8 388,507.0 389,507.2 390,508.3 391,509.6 392,509.9 393,509.0 394,508.8 395,509.3 396,508.2 397,510.4 398,510.7 399,509.0 400,509.2 401,508.9 402,508.8 403,506.0 404,504.9 405,505.5 406,507.6 407,504.1 408,504.7 409,506.8 410,505.9 411,507.0 412,504.9 413,506.4 414,502.9 415,500.2 416,500.1 417,504.2 418,506.2 419,507.8 420,499.7 421,503.4 422,499.9 423,504.6 424,504.6 425,503.7 426,504.4 427,505.5 428,508.0 429,504.4 430,506.7 431,504.5 432,505.0 433,506.2 434,503.6 435,503.6 436,507.6 437,505.2 438,506.4 439,504.0 440,503.7 441,505.1 442,504.7 443,505.0 444,507.1 445,503.2 446,505.4 447,506.4 448,503.7 449,507.6 450,505.1 451,500.1 452,503.6 453,503.6 454,506.1 455,507.1 456,505.0 457,503.2 458,502.5 459,502.4 460,506.4 461,506.0 462,504.0 463,502.8 464,505.8 465,502.6 466,506.3 467,501.8 468,504.0 469,504.2 470,498.4 471,501.6 472,505.0 473,504.0 474,503.2 475,504.1 476,501.6 477,505.8 478,506.6 479,502.5 480,504.5 481,506.2 482,501.8 483,498.4 484,506.2 485,503.3 486,505.2 487,506.8 488,506.6 489,505.9 490,504.2 491,505.4 492,504.7 493,506.7 494,504.7 495,503.9 496,504.2 497,505.0 498,504.6 499,507.4 500,508.0 501,505.7 502,508.3 503,508.4 504,506.8 505,507.3 506,508.6 507,509.9 508,508.4 509,508.0 510,509.2 511,509.5 512,510.2 513,508.4 514,510.1 515,510.3 516,510.8 517,510.0 518,509.9 519,510.9 520,510.4 521,510.6 522,510.4 523,509.2 524,510.1 525,510.8 526,510.1 527,510.7 528,509.2 529,509.9 530,510.1 531,510.2 532,510.3 533,509.8 534,510.7 535,510.1 536,510.0 537,509.9 538,510.1 539,510.1 540,510.1 541,510.6 542,511.0 543,510.2 544,510.7 545,510.2 546,510.2 547,510.3 548,509.8 549,510.1 550,509.2 551,510.2 552,510.7 553,510.9 554,510.5 555,510.7 556,510.3 557,509.8 558,509.8 559,510.0 560,510.3 561,510.9 562,510.8 563,510.8 564,509.2 565,509.8 566,510.3 567,510.5 568,510.2 569,510.6 570,509.2 571,509.2 572,510.8 573,510.5 574,509.2 575,509.8 576,510.9 577,510.5 578,509.8 579,510.4 580,510.1 581,509.8 582,510.3 583,510.2 584,509.2 585,510.3 586,510.4 587,510.4 588,510.3 589,510.0 590,509.8 591,510.1 592,510.8 593,510.0 594,510.5 595,510.2 596,510.3 597,510.1 598,510.7 599,509.9 600,510.9 601,510.7 602,510.2 603,510.3 604,510.9 605,510.3 606,510.5 607,510.7 608,510.1 609,510.9 610,510.0 611,510.1 612,510.5 613,510.0 614,510.2 615,510.6 616,510.1 617,510.5 618,510.9 619,510.9 620,510.3 621,510.2 622,510.0 623,510.7 624,510.9 625,510.1 626,510.6 627,510.6 628,510.5 629,510.1 630,509.9 631,509.9 632,510.0 633,510.6 634,509.9 635,510.7 636,510.5 637,510.5 638,510.7 639,510.0 640,510.0 641,510.8 642,509.9 643,511.0 644,510.3 645,509.8 646,510.0 647,510.3 648,510.9 649,510.1 650,510.9 651,510.8 652,510.2 653,510.7 654,510.4 655,510.5 656,509.8 657,510.4 658,510.1 659,509.9 660,510.0 661,510.0 662,510.0 663,509.8 664,510.4 665,510.0 666,510.5 667,510.1 668,510.5 669,510.7 670,510.6 671,510.9 672,510.8 673,510.0 674,510.9 675,510.3 676,510.9 677,510.8 678,510.7 679,510.3 680,510.8 681,510.8 682,510.6 683,510.0 684,510.7 685,509.9 686,510.3 687,510.4 688,510.9 689,510.0 690,510.3 691,510.7 692,510.2 693,511.0 694,510.5 695,510.1 696,510.8 697,510.6 698,509.9 699,510.2 700,510.7 701,510.8 702,511.0 703,510.0 704,510.9 705,510.1 706,510.4 707,509.8 708,509.9 709,510.0 710,509.9 711,510.0 712,510.3 713,510.8 714,510.6 715,510.9 716,510.4 717,510.5 718,510.8 719,510.4 720,509.9 721,510.9 722,510.1 723,510.3 724,510.9 725,510.0 726,510.2 727,510.5 728,510.6 729,510.5 730,510.6 731,510.1 732,509.8 733,510.1 734,509.9 735,510.8 736,510.1 737,510.7 738,509.9 739,510.8 740,510.8 741,510.4 742,509.8 743,510.3 744,510.0 745,510.5 746,509.1 747,510.4 748,509.7 749,510.1 750,510.9 751,510.5 752,510.8 753,510.3 754,509.9 755,510.7 756,509.8 757,510.5 758,510.8 759,509.7 760,510.0 761,510.7 762,510.1 763,510.8 764,510.2 765,510.5 766,510.5 767,510.8 768,510.8 769,510.2 770,510.2 771,509.8 772,509.9 773,510.8 774,510.5 775,510.6 776,509.9 777,510.2 778,510.9 779,509.6 780,510.1 781,510.0 782,510.4 783,509.0 784,510.7 785,510.7 786,510.2 787,510.2 788,510.2 789,509.0 790,510.0 791,509.7 792,510.3 793,510.1 794,509.9 795,510.3 796,509.8 797,510.4 798,510.2 799,510.2 800,510.3 801,508.9 802,509.9 803,509.9 804,509.9 805,510.1 806,510.7 807,510.2 808,510.8 809,510.2 810,510.5 811,510.5 812,509.5 813,509.8 814,510.1 815,510.4 816,509.8 817,510.5 818,510.4 819,507.9 820,510.1 821,509.9 822,508.9 823,509.8 824,507.8 825,510.5 826,510.0 827,508.8 828,509.7 829,510.0 830,508.9 831,509.0 832,509.7 833,508.9 834,510.2 835,510.2 836,510.4 837,509.2 838,508.9 839,509.2 840,509.3 841,509.7 842,510.1 843,509.2 844,510.2 845,509.3 846,509.8 847,508.9 848,510.1 849,508.8 850,510.0 851,510.4 852,509.7 853,507.8 854,509.4 855,510.1 856,510.4 857,509.1 858,510.0 859,510.2 860,507.8 861,509.7 862,509.8 863,509.6 864,509.5 865,509.9 866,509.1 867,509.6 868,509.3 869,508.8 870,509.1 871,509.4 872,509.7 873,509.1 874,510.1 875,510.1 876,507.8 877,509.4 878,509.5 879,510.2 880,510.5 881,509.7 882,510.0 883,510.4 884,509.5 885,509.1 886,510.2 887,510.4 888,509.4 889,510.0 890,510.3 891,510.2 892,510.2 893,509.0 894,510.4 895,509.8 896,507.7 897,509.6 898,508.7 899,509.7 900,510.4 901,508.9 902,509.8 903,509.7 904,510.4 905,509.1 906,510.1 907,509.5 908,509.6 909,509.8 910,508.7 911,510.4 912,507.7 913,509.9 914,508.9 915,508.8 916,509.8 917,509.8 918,510.1 919,510.1 920,510.2 921,510.1 922,509.9 923,508.6 924,508.9 925,509.8 926,509.2 927,507.7 928,510.1 929,509.8 930,509.2 931,509.8 932,508.7 933,509.1 934,507.7 935,509.9 936,510.3 937,509.9 938,507.7 939,509.7 940,510.4 941,507.7 942,509.9 943,509.5 944,509.2 945,509.1 946,510.2 947,510.0 948,509.7 949,508.9 950,509.9 951,507.7 952,510.4 953,509.4 954,508.6 955,509.2 956,510.1 957,509.2 958,508.8 959,509.3 960,509.7 961,510.4 962,509.9 963,509.9 964,509.7 965,510.2 966,510.0 967,509.8 968,510.2 969,509.1 970,507.6 971,509.7 972,510.3 973,510.4 974,509.4 975,509.9 976,510.4 977,508.8 978,510.0 979,510.1 980,509.3 981,509.8 982,508.7 983,509.3 984,509.7 985,509.9 986,508.8 987,507.6 988,510.2 989,509.9 990,508.6 991,510.1 992,509.2 993,510.5 994,509.7 995,509.5 996,509.4 997,509.4 998,508.6 999,509.8 1000,509.9 1001,509.1 1002,508.6 1003,510.2 1004,509.5 1005,509.8 1006,509.0 1007,510.0 1008,509.8 1009,509.5 1010,510.3 1011,510.3 1012,510.2 1013,509.0 1014,510.1 1015,507.6 1016,510.0 1017,508.9 1018,509.1 1019,509.1 1020,509.8 1021,508.8 1022,509.4 1023,509.1 1024,508.9 1025,510.2 1026,509.2 1027,507.6 1028,509.3 1029,508.6 1030,509.1 1031,509.2 1032,508.7 1033,510.3 1034,507.6 1035,509.9 1036,508.5 1037,507.6 1038,509.4 1039,509.7 1040,508.9 1041,509.8 1042,508.9 1043,508.0 1044,508.5 1045,508.0 1046,509.5 1047,507.3 1048,508.4 1049,505.3 1050,507.9 1051,507.5 1052,508.7 1053,508.1 1054,509.1 1055,506.0 1056,508.8 1057,507.1 1058,508.0 1059,506.7 1060,505.1 1061,508.2 1062,505.3 1063,506.9 1064,503.9 1065,505.8 1066,504.1 1067,507.7 1068,507.1 1069,505.6 1070,505.7 1071,507.3 1072,498.0 1073,503.8 1074,501.9 1075,504.3 1076,501.4 1077,500.3 1078,500.5 1079,502.0 1080,496.6 1081,502.8 1082,504.0 1083,502.1 1084,504.1 1085,504.2 1086,500.2 1087,505.9 1088,501.3 1089,501.2 1090,501.6 1091,505.9 1092,504.5 1093,507.0 1094,504.7 1095,504.2 1096,506.4 1097,506.0 1098,507.3 1099,505.9 1100,507.2 1101,505.0 1102,507.1 1103,504.0 1104,507.6 1105,504.1 1106,505.7 1107,505.8 1108,506.0 1109,505.0 1110,506.6 1111,508.3 1112,506.0 1113,506.2 1114,507.4 1115,506.6 1116,503.2 1117,506.7 1118,506.9 1119,505.7 1120,507.5 1121,506.6 1122,506.7 1123,507.9 1124,508.9 1125,507.8 1126,506.7 1127,506.5 1128,507.1 1129,506.5 1130,507.0 1131,508.9 1132,508.3 1133,507.1 1134,508.9 1135,509.5 1136,507.4 1137,509.0 1138,507.3 1139,508.2 1140,507.5 1141,508.7 1142,509.7 1143,507.4 1144,509.5 1145,508.7 1146,508.1 1147,509.6 1148,509.3 1149,507.5 1150,509.3 1151,505.6 1152,508.8 1153,507.8 1154,507.8 1155,509.0 1156,507.3 1157,509.0 1158,506.2 1159,508.1 1160,505.7 1161,506.5 1162,507.9 1163,508.5 1164,507.3 1165,507.3 1166,506.8 1167,507.4 1168,507.7 1169,507.4 1170,507.3 1171,505.5 1172,504.2 1173,505.0 1174,506.2 1175,506.3 1176,506.1 1177,506.8 1178,505.0 1179,506.2 1180,503.8 1181,506.1 1182,504.1 1183,505.2 1184,507.6 1185,507.7 1186,506.2 1187,504.7 1188,503.5 1189,507.9 1190,505.6 1191,505.6 1192,504.5 1193,502.9 1194,502.7 1195,503.5 1196,504.2 1197,507.5 1198,505.7 1199,506.7 1200,506.7 1201,507.1 1202,504.1 1203,507.1 1204,504.9 1205,506.9 1206,504.6 1207,507.7 1208,508.2 1209,503.9 1210,508.3 1211,506.1 1212,508.1 1213,507.3 1214,508.1 1215,508.2 1216,506.8 1217,506.1 1218,503.8 1219,508.6 1220,507.8 1221,507.2 1222,507.5 1223,507.5 1224,509.2 1225,508.5 1226,507.2 1227,510.0 1228,508.8 1229,510.0 1230,510.3 1231,509.7 1232,509.0 1233,510.3 1234,510.2 1235,510.1 1236,509.7 1237,509.1 1238,508.5 1239,509.4 1240,509.6 1241,508.9 1242,509.7 1243,509.5 1244,509.6 1245,510.3 1246,510.3 1247,509.4 1248,510.0 1249,509.7 1250,509.5 1251,509.0 1252,510.5 1253,507.7 1254,509.4 1255,509.8 1256,509.8 1257,509.4 1258,509.9 1259,509.6 1260,510.4 1261,510.1 1262,509.1 1263,509.0 1264,510.0 1265,510.4 1266,509.1 1267,510.0 1268,509.2 1269,510.5 1270,510.5 1271,509.6 1272,508.0 1273,509.0 1274,508.0 1275,509.4 1276,509.5 1277,509.1 1278,509.3 1279,509.4 1280,509.9 1281,510.4 1282,509.4 1283,510.5 1284,509.6 1285,510.5 1286,510.2 1287,509.8 1288,510.3 1289,509.8 1290,510.5 1291,508.3 1292,510.0 1293,509.7 1294,510.0 1295,510.1 1296,510.6 1297,510.5 1298,510.4 1299,510.5 1300,509.9 1301,510.2 1302,509.5 1303,509.9 1304,509.3 1305,509.7 1306,510.4 1307,509.9 1308,510.7 1309,510.2 1310,510.1 1311,509.9 1312,509.4 1313,510.0 1314,509.6 1315,510.3 1316,510.7 1317,509.9 1318,510.3 1319,509.3 1320,509.5 1321,509.6 1322,510.5 1323,509.8 1324,509.6 1325,509.4 1326,509.7 1327,509.3 1328,510.3 1329,509.7 1330,508.5 1331,509.9 1332,510.3 1333,510.6 1334,510.3 1335,510.3 1336,509.4 1337,509.5 1338,509.8 1339,509.7 1340,509.8 1341,509.6 1342,510.7 1343,510.2 1344,510.4 1345,510.2 1346,509.3 1347,509.9 1348,510.4 1349,510.6 1350,509.8 1351,509.4 1352,509.9 1353,509.3 1354,509.4 1355,509.8 1356,510.7 1357,509.3 1358,509.5 1359,510.0 1360,510.0 1361,510.0 1362,510.0 1363,509.7 1364,510.0 1365,510.0 1366,509.3 1367,510.6 1368,510.3 1369,509.3 1370,509.3 1371,509.5 1372,510.7 1373,509.9 1374,509.8 1375,509.4 1376,510.0 1377,510.7 1378,509.5 1379,508.5 1380,509.5 1381,510.0 1382,509.6 1383,510.8 1384,509.6 1385,509.5 1386,510.3 1387,510.7 1388,510.4 1389,510.0 1390,509.7 1391,510.4 1392,510.5 1393,510.4 1394,509.6 1395,510.4 1396,510.4 1397,510.4 1398,510.5 1399,510.3 1400,509.7 1401,509.6 1402,510.6 1403,510.4 1404,510.1 1405,510.2 1406,509.4 1407,510.2 1408,509.6 1409,510.2 1410,510.2 1411,509.9 1412,510.0 1413,510.7 1414,510.2 1415,509.4 1416,510.4 1417,509.3 1418,510.2 1419,510.5 1420,509.3 1421,510.6 1422,509.4 1423,509.3 1424,510.2 1425,510.3 1426,510.6 1427,508.5 1428,510.3 1429,510.6 1430,509.9 1431,509.6 1432,509.3 1433,510.4 1434,510.3 1435,509.4 1436,510.5 1437,509.9 1438,509.6 1439,510.1 1440,509.5 1441,510.5 1442,508.5 1443,509.6 1444,510.7 1445,510.5 1446,508.5 1447,510.4 1448,510.0 1449,510.1 1450,510.7 1451,510.7 1452,509.8 1453,510.0 1454,510.3 1455,509.4 1456,510.1 1457,510.1 1458,509.4 1459,509.4 1460,509.4 1461,510.0 1462,510.3 1463,509.7 1464,509.9 1465,509.3 1466,510.6 1467,510.2 1468,510.0 1469,510.0 1470,510.8 1471,510.4 1472,509.8 1473,510.6 1474,510.0 1475,509.3 1476,510.1 1477,509.6 1478,509.5 1479,510.4 1480,510.0 1481,509.9 1482,510.0 1483,510.3 1484,510.0 1485,510.5 1486,509.5 1487,509.3 1488,509.7 1489,509.7 1490,509.6 1491,509.5 1492,510.4 1493,510.7 1494,510.2 1495,509.8 1496,509.4 1497,510.7 1498,510.6 1499,509.4 1500,510.5 1501,509.6 1502,509.8 1503,508.5 1504,509.5 1505,509.6 1506,509.9 1507,509.8 1508,510.2 1509,510.7 1510,509.6 1511,509.8 1512,509.7 1513,510.3 1514,510.5 1515,509.7 1516,510.3 1517,509.4 1518,509.3 1519,509.3 1520,510.3 1521,510.0 1522,510.7 1523,510.0 1524,509.6 1525,510.5 1526,510.4 1527,508.5 1528,510.2 1529,509.3 1530,510.1 1531,510.4 1532,509.3 1533,510.1 1534,509.6 1535,509.8 1536,509.4 1537,509.9 1538,510.0 1539,508.5 1540,510.5 1541,510.3 1542,509.7 1543,509.6 1544,509.7 1545,510.1 1546,510.0 1547,508.5 1548,510.6 1549,509.7 1550,510.6 1551,509.9 1552,510.2 1553,509.7 1554,510.7 1555,508.5 1556,508.5 1557,510.6 1558,510.1 1559,509.3 1560,510.0 1561,510.3 1562,510.6 1563,510.4 1564,510.0 1565,510.2 1566,510.4 1567,509.7 1568,510.2 1569,510.1 1570,509.8 1571,510.3 1572,510.1 1573,509.4 1574,510.2 1575,509.3 1576,510.2 1577,509.6 1578,509.7 1579,509.8 1580,510.1 1581,510.4 1582,509.9 1583,510.2 1583,511.9" fill="#5a5a5a"/></svg>
<div class="r" style="left:2px;top:446px;width:292px;height:318px;background:transparent;"></div>
<div class="r" style="left:295px;top:764px;width:1294px;height:8px;border-radius:4px 0 0 4px;background:#777;"></div>
<div class="r" style="left:1589px;top:764px;width:8px;height:8px;border-radius:0 0 6px 0;background:#f0f0f0;"></div>
<div class="r" style="left:1584px;top:446px;width:5px;height:318px;background:#2e2e2e;"></div>
<div class="r" style="left:1582.5px;top:440px;width:1.5px;height:323px;background:rgba(245,61,208,0.62);"></div>
<svg class="r" style="left:1577.3px;top:429.8px;" width="12" height="16" viewBox="0 0 12 16"><path d="M0 2.5 Q0 0 2.5 0H9.3Q11.8 0 11.8 2.5V9.5Q11.8 12.5 6 15.6Q0 12.5 0 9.5Z" fill="#f53dd0"/></svg>
</body></html>
